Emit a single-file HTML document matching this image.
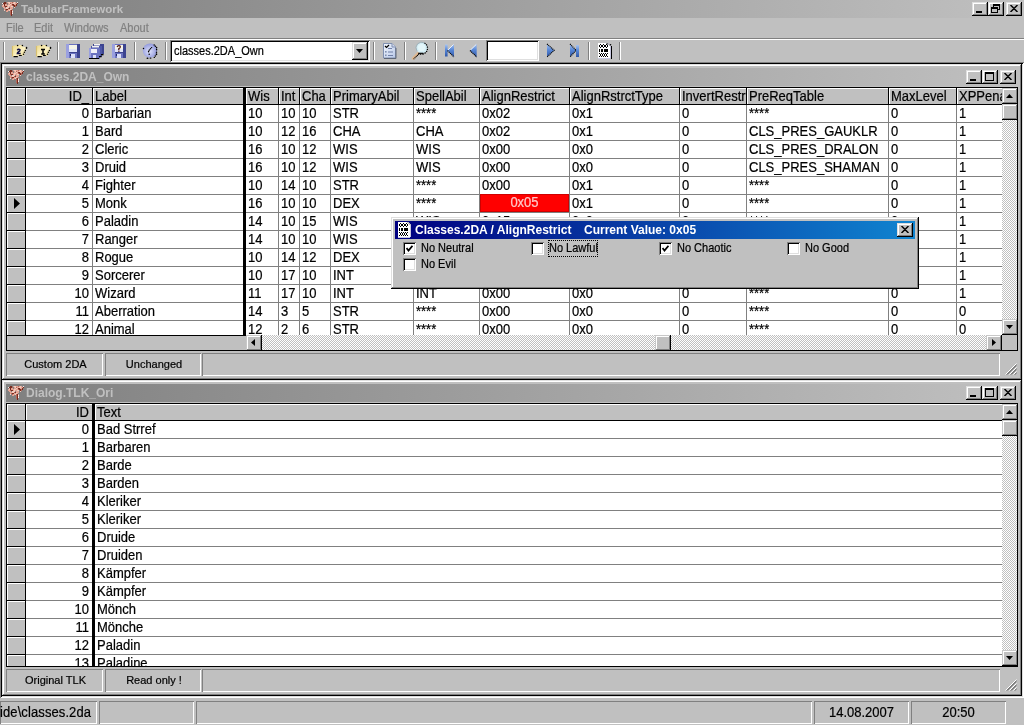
<!DOCTYPE html><html><head><meta charset="utf-8"><style>
*{margin:0;padding:0}
html,body{width:1024px;height:725px;overflow:hidden;background:#c0c0c0;font-family:"Liberation Sans",sans-serif;}
div,svg{position:absolute;box-sizing:border-box}
.t{white-space:pre;will-change:transform;-webkit-text-stroke:0.2px currentColor}
.a{position:absolute}
</style></head><body>
<div style="left:0px;top:0px;width:1024px;height:18px;background:linear-gradient(to right,#808080,#c0c0c0);"></div>
<svg class="a" style="left:0px;top:-1px" width="18" height="17" viewBox="0 0 18 17"><rect x="4" y="3" width="2" height="1" fill="#7a2a1e"/><rect x="7" y="3" width="1" height="1" fill="#e4a494"/><rect x="8" y="3" width="2" height="1" fill="#f4cbbd"/><rect x="10" y="3" width="2" height="1" fill="#e4a494"/><rect x="12" y="3" width="1" height="1" fill="#b4685a"/><rect x="13" y="3" width="1" height="1" fill="#e4a494"/><rect x="14" y="3" width="1" height="1" fill="#f4cbbd"/><rect x="15" y="3" width="1" height="1" fill="#e4a494"/><rect x="17" y="3" width="1" height="1" fill="#f4ecec"/><rect x="2" y="4" width="1" height="1" fill="#f4ecec"/><rect x="3" y="4" width="3" height="1" fill="#7a2a1e"/><rect x="6" y="4" width="1" height="1" fill="#b4685a"/><rect x="8" y="4" width="1" height="1" fill="#e4a494"/><rect x="9" y="4" width="1" height="1" fill="#f4cbbd"/><rect x="10" y="4" width="1" height="1" fill="#b4685a"/><rect x="11" y="4" width="2" height="1" fill="#e4a494"/><rect x="13" y="4" width="2" height="1" fill="#f4cbbd"/><rect x="15" y="4" width="2" height="1" fill="#e4a494"/><rect x="17" y="4" width="1" height="1" fill="#7a2a1e"/><rect x="3" y="5" width="1" height="1" fill="#e4a494"/><rect x="4" y="5" width="1" height="1" fill="#7a2a1e"/><rect x="5" y="5" width="2" height="1" fill="#e4a494"/><rect x="8" y="5" width="2" height="1" fill="#e4a494"/><rect x="10" y="5" width="1" height="1" fill="#f4cbbd"/><rect x="11" y="5" width="1" height="1" fill="#e4a494"/><rect x="12" y="5" width="2" height="1" fill="#7a2a1e"/><rect x="14" y="5" width="2" height="1" fill="#e4a494"/><rect x="16" y="5" width="1" height="1" fill="#7a2a1e"/><rect x="2" y="6" width="1" height="1" fill="#e4a494"/><rect x="3" y="6" width="1" height="1" fill="#f4cbbd"/><rect x="4" y="6" width="1" height="1" fill="#7a2a1e"/><rect x="5" y="6" width="3" height="1" fill="#e4a494"/><rect x="8" y="6" width="2" height="1" fill="#f4cbbd"/><rect x="10" y="6" width="2" height="1" fill="#e4a494"/><rect x="12" y="6" width="1" height="1" fill="#b4685a"/><rect x="13" y="6" width="2" height="1" fill="#7a2a1e"/><rect x="15" y="6" width="1" height="1" fill="#b4685a"/><rect x="16" y="6" width="1" height="1" fill="#7a2a1e"/><rect x="2" y="7" width="2" height="1" fill="#e4a494"/><rect x="4" y="7" width="1" height="1" fill="#b4685a"/><rect x="5" y="7" width="2" height="1" fill="#7a2a1e"/><rect x="7" y="7" width="1" height="1" fill="#e4a494"/><rect x="8" y="7" width="1" height="1" fill="#f4cbbd"/><rect x="9" y="7" width="2" height="1" fill="#e4a494"/><rect x="11" y="7" width="2" height="1" fill="#f4cbbd"/><rect x="14" y="7" width="1" height="1" fill="#7a2a1e"/><rect x="15" y="7" width="1" height="1" fill="#b4685a"/><rect x="3" y="8" width="2" height="1" fill="#e4a494"/><rect x="6" y="8" width="3" height="1" fill="#f4cbbd"/><rect x="10" y="8" width="3" height="1" fill="#e4a494"/><rect x="14" y="8" width="1" height="1" fill="#f4cbbd"/><rect x="4" y="9" width="2" height="1" fill="#e4a494"/><rect x="6" y="9" width="2" height="1" fill="#f4cbbd"/><rect x="8" y="9" width="1" height="1" fill="#b4685a"/><rect x="9" y="9" width="1" height="1" fill="#7a2a1e"/><rect x="10" y="9" width="3" height="1" fill="#e4a494"/><rect x="4" y="10" width="1" height="1" fill="#e4a494"/><rect x="5" y="10" width="1" height="1" fill="#b4685a"/><rect x="6" y="10" width="2" height="1" fill="#7a2a1e"/><rect x="8" y="10" width="2" height="1" fill="#e4a494"/><rect x="10" y="10" width="1" height="1" fill="#f4cbbd"/><rect x="11" y="10" width="1" height="1" fill="#e4a494"/><rect x="4" y="11" width="1" height="1" fill="#f4cbbd"/><rect x="6" y="11" width="1" height="1" fill="#b4685a"/><rect x="7" y="11" width="2" height="1" fill="#e4a494"/><rect x="9" y="11" width="1" height="1" fill="#f4cbbd"/><rect x="10" y="11" width="1" height="1" fill="#b4685a"/><rect x="11" y="11" width="1" height="1" fill="#7a2a1e"/><rect x="12" y="11" width="1" height="1" fill="#e4a494"/><rect x="6" y="12" width="2" height="1" fill="#e4a494"/><rect x="10" y="12" width="1" height="1" fill="#b4685a"/><rect x="11" y="12" width="1" height="1" fill="#7a2a1e"/><rect x="12" y="12" width="1" height="1" fill="#f4ecec"/><rect x="10" y="13" width="1" height="1" fill="#b4685a"/><rect x="11" y="13" width="1" height="1" fill="#7a2a1e"/><rect x="12" y="13" width="1" height="1" fill="#f4cbbd"/><rect x="10" y="14" width="1" height="1" fill="#b4685a"/><rect x="11" y="14" width="1" height="1" fill="#7a2a1e"/><rect x="12" y="14" width="1" height="1" fill="#f4ecec"/><rect x="10" y="15" width="1" height="1" fill="#b4685a"/><rect x="11" y="15" width="1" height="1" fill="#7a2a1e"/><rect x="11" y="16" width="1" height="1" fill="#7a2a1e"/></svg>
<div class="t" style="left:21px;top:3px;font-size:11.5px;line-height:13px;color:#c0c0c0;font-weight:bold;-webkit-text-stroke:0;">TabularFramework</div>
<div style="left:972px;top:2px;width:16px;height:14px;background:#c0c0c0;box-shadow:inset -1px -1px #000,inset 1px 1px #dfdfdf,inset -2px -2px #808080,inset 2px 2px #fff;"></div>
<div style="left:976px;top:11px;width:6px;height:2px;background:#000;"></div>
<div style="left:988px;top:2px;width:16px;height:14px;background:#c0c0c0;box-shadow:inset -1px -1px #000,inset 1px 1px #dfdfdf,inset -2px -2px #808080,inset 2px 2px #fff;"></div>
<div style="left:993px;top:4px;width:7px;height:6px;border:1px solid #000;border-top-width:2px;box-sizing:border-box;"></div>
<div style="left:991px;top:7px;width:7px;height:6px;border:1px solid #000;border-top-width:2px;box-sizing:border-box;background:#c0c0c0;"></div>
<div style="left:1006px;top:2px;width:16px;height:14px;background:#c0c0c0;box-shadow:inset -1px -1px #000,inset 1px 1px #dfdfdf,inset -2px -2px #808080,inset 2px 2px #fff;"></div>
<svg class="a" style="left:1010px;top:5px" width="8" height="7" viewBox="0 0 8 7"><path d="M0.5 0 L4 3.5 L7.5 0 M0.5 7 L4 3.5 L7.5 7" stroke="#000" stroke-width="1.5" fill="none"/></svg>
<div class="t" style="left:6px;top:22px;font-size:11px;line-height:13px;color:#808080;font-weight:normal;transform:scaleY(1.12);transform-origin:0 10px;">File</div>
<div class="t" style="left:34px;top:22px;font-size:11px;line-height:13px;color:#808080;font-weight:normal;transform:scaleY(1.12);transform-origin:0 10px;">Edit</div>
<div class="t" style="left:64px;top:22px;font-size:11px;line-height:13px;color:#808080;font-weight:normal;transform:scaleY(1.12);transform-origin:0 10px;">Windows</div>
<div class="t" style="left:120px;top:22px;font-size:11px;line-height:13px;color:#808080;font-weight:normal;transform:scaleY(1.12);transform-origin:0 10px;">About</div>
<div style="left:0px;top:38px;width:1024px;height:1px;background:#808080;"></div>
<div style="left:0px;top:39px;width:1024px;height:1px;background:#fff;"></div>
<div style="left:3px;top:42px;width:1px;height:18px;background:#808080;"></div>
<div style="left:4px;top:42px;width:1px;height:18px;background:#fff;"></div>
<div style="left:57px;top:42px;width:1px;height:18px;background:#808080;"></div>
<div style="left:58px;top:42px;width:1px;height:18px;background:#fff;"></div>
<div style="left:134px;top:42px;width:1px;height:18px;background:#808080;"></div>
<div style="left:135px;top:42px;width:1px;height:18px;background:#fff;"></div>
<div style="left:165px;top:42px;width:1px;height:18px;background:#808080;"></div>
<div style="left:166px;top:42px;width:1px;height:18px;background:#fff;"></div>
<div style="left:373px;top:42px;width:1px;height:18px;background:#808080;"></div>
<div style="left:374px;top:42px;width:1px;height:18px;background:#fff;"></div>
<div style="left:404px;top:42px;width:1px;height:18px;background:#808080;"></div>
<div style="left:405px;top:42px;width:1px;height:18px;background:#fff;"></div>
<div style="left:435px;top:42px;width:1px;height:18px;background:#808080;"></div>
<div style="left:436px;top:42px;width:1px;height:18px;background:#fff;"></div>
<div style="left:588px;top:42px;width:1px;height:18px;background:#808080;"></div>
<div style="left:589px;top:42px;width:1px;height:18px;background:#fff;"></div>
<div style="left:619px;top:42px;width:1px;height:18px;background:#808080;"></div>
<div style="left:620px;top:42px;width:1px;height:18px;background:#fff;"></div>
<div style="left:0px;top:62px;width:1024px;height:636px;box-shadow:inset 1px 1px #808080,inset -1px -1px #fff,inset 2px 2px #000,inset -2px -2px #dfdfdf;"></div>
<div style="left:0px;top:701px;width:97px;height:23px;box-shadow:inset 1px 1px #808080,inset -1px -1px #fff;"></div>
<div style="left:99px;top:701px;width:95px;height:23px;box-shadow:inset 1px 1px #808080,inset -1px -1px #fff;"></div>
<div style="left:196px;top:701px;width:616px;height:23px;box-shadow:inset 1px 1px #808080,inset -1px -1px #fff;"></div>
<div style="left:814px;top:701px;width:95px;height:23px;box-shadow:inset 1px 1px #808080,inset -1px -1px #fff;"></div>
<div style="left:911px;top:701px;width:95px;height:23px;box-shadow:inset 1px 1px #808080,inset -1px -1px #fff;"></div>
<div class="t" style="left:0px;top:705px;font-size:13px;line-height:15px;color:#000;font-weight:normal;letter-spacing:0.1px;transform:scaleY(1.1);transform-origin:0 12px;">ide\classes.2da</div>
<div class="t" style="left:814px;top:705px;font-size:13px;line-height:15px;color:#000;font-weight:normal;width:95px;text-align:center;transform:scaleY(1.1);transform-origin:0 12px;">14.08.2007</div>
<div class="t" style="left:911px;top:705px;font-size:13px;line-height:15px;color:#000;font-weight:normal;width:95px;text-align:center;transform:scaleY(1.1);transform-origin:0 12px;">20:50</div>
<svg class="a" style="left:9px;top:42px" width="20" height="18" viewBox="0 0 20 18"><defs><linearGradient id="fg" x1="0" y1="0" x2="1" y2="1"><stop offset="0" stop-color="#ecd888"/><stop offset=".55" stop-color="#fcf2c4"/><stop offset="1" stop-color="#e4cc78"/></linearGradient></defs><path d="M3 4 L8.5 3 L13.5 3 L14 4.8 L18 5 L14.8 13.5 L3.5 15 Z" fill="url(#fg)"/><path d="M3.5 4 L3.5 14.5" stroke="#d8c070" stroke-width="1.2"/><circle cx="8.6" cy="3.5" r=".8" fill="#000"/><circle cx="13.4" cy="3.5" r=".8" fill="#000"/><ellipse cx="17.5" cy="5.9" rx=".8" ry="1.1" fill="#000"/><circle cx="16.4" cy="8.4" r=".75" fill="#000"/><circle cx="15.4" cy="10.3" r=".75" fill="#000"/><circle cx="14.5" cy="12.3" r=".75" fill="#000"/><path d="M4.5 14.6 H8.8 M9.9 13.5 H12.8" stroke="#000" stroke-width="1.2"/><path d="M8.3 8.2 Q9.6 6.6 11 7.8 L10.8 8.8 L8.6 10.6 L8.4 11.6 H11.7" stroke="#101048" stroke-width="1.5" fill="none"/></svg>
<svg class="a" style="left:33px;top:42px" width="20" height="18" viewBox="0 0 20 18"><defs><linearGradient id="fg" x1="0" y1="0" x2="1" y2="1"><stop offset="0" stop-color="#ecd888"/><stop offset=".55" stop-color="#fcf2c4"/><stop offset="1" stop-color="#e4cc78"/></linearGradient></defs><path d="M3 4 L8.5 3 L13.5 3 L14 4.8 L18 5 L14.8 13.5 L3.5 15 Z" fill="url(#fg)"/><path d="M3.5 4 L3.5 14.5" stroke="#d8c070" stroke-width="1.2"/><circle cx="8.6" cy="3.5" r=".8" fill="#000"/><circle cx="13.4" cy="3.5" r=".8" fill="#000"/><ellipse cx="17.5" cy="5.9" rx=".8" ry="1.1" fill="#000"/><circle cx="16.4" cy="8.4" r=".75" fill="#000"/><circle cx="15.4" cy="10.3" r=".75" fill="#000"/><circle cx="14.5" cy="12.3" r=".75" fill="#000"/><path d="M4.5 14.6 H8.8 M9.9 13.5 H12.8" stroke="#000" stroke-width="1.2"/><path d="M8 7.5 h4 M10 7.5 v4.5 M8.2 12 h3.6" stroke="#000" stroke-width="1.5" fill="none"/></svg>
<svg class="a" style="left:66px;top:44px" width="14" height="14" viewBox="0 0 14 14"><rect x="0" y="0" width="14" height="14" fill="#6a72c0"/><rect x="0" y="0" width="3" height="14" fill="#9aa0e0"/><rect x="11" y="0" width="3" height="14" fill="#3c4490"/><rect x="3" y="1" width="8" height="7" fill="#f4f4e8"/><rect x="3" y="5" width="8" height="3" fill="#e0e4f8"/><rect x="3" y="8" width="8" height="1" fill="#3c4490"/><rect x="4" y="10" width="2" height="2" fill="#202860"/><rect x="5" y="10" width="4" height="4" fill="#dce0f8"/></svg>
<svg class="a" style="left:112px;top:44px" width="14" height="14" viewBox="0 0 14 14"><rect x="0" y="0" width="14" height="14" fill="#6a72c0"/><rect x="0" y="0" width="3" height="14" fill="#9aa0e0"/><rect x="11" y="0" width="3" height="14" fill="#3c4490"/><rect x="3" y="1" width="8" height="7" fill="#f4f4e8"/><rect x="3" y="5" width="8" height="3" fill="#e0e4f8"/><rect x="3" y="8" width="8" height="1" fill="#3c4490"/><rect x="4" y="10" width="2" height="2" fill="#202860"/><rect x="5" y="10" width="4" height="4" fill="#dce0f8"/><path d="M5.2 3 Q5.5 1.5 7 1.6 Q8.6 1.8 8.2 3.2 Q7.8 4.2 6.8 4.6 V6" stroke="#501810" stroke-width="1.3" fill="none"/><rect x="6.2" y="6.6" width="1.3" height="1.2" fill="#501810"/></svg>
<svg class="a" style="left:88px;top:43px" width="17" height="16" viewBox="0 0 17 16"><rect x="5" y="1" width="11" height="10" fill="#3c4490"/><rect x="6" y="1" width="6" height="1.5" fill="#f4f4f4"/><rect x="3" y="3" width="11" height="11" fill="#4c56a8"/><rect x="4" y="3" width="7" height="1.5" fill="#f4f4f4"/><rect x="1" y="5" width="11" height="11" fill="#6a72c0"/><rect x="1" y="5" width="2" height="11" fill="#9aa0e0"/><rect x="3" y="6" width="6" height="4" fill="#f0f0f8"/><rect x="5" y="12" width="3" height="3" fill="#dce0f8"/><rect x="1" y="15" width="10" height="1.3" fill="#000"/><rect x="11" y="13" width="2.5" height="1.3" fill="#000"/><rect x="13" y="11" width="2.5" height="1.3" fill="#000"/></svg>
<svg class="a" style="left:142px;top:42px" width="16" height="17" viewBox="0 0 16 17"><defs><radialGradient id="gr" cx=".45" cy=".55" r=".6"><stop offset="0" stop-color="#e0e4fc"/><stop offset="1" stop-color="#8890d8"/></radialGradient></defs><circle cx="8" cy="8.6" r="7.2" fill="url(#gr)"/><circle cx="12.2" cy="3" r=".75" fill="#000"/><circle cx="13.4" cy="4.2" r=".75" fill="#000"/><circle cx="14.6" cy="5.5" r=".75" fill="#000"/><ellipse cx="14.6" cy="7.6" rx=".7" ry="1" fill="#000"/><circle cx="14.5" cy="10.3" r=".75" fill="#000"/><ellipse cx="14.5" cy="12.2" rx=".8" ry="1" fill="#000"/><circle cx="13.3" cy="14.1" r=".75" fill="#000"/><circle cx="12.3" cy="15.4" r=".7" fill="#000"/><ellipse cx="8.5" cy="16.1" rx="1" ry=".7" fill="#000"/><ellipse cx="5.5" cy="16.2" rx="1" ry=".7" fill="#000"/><circle cx="1.5" cy="6.5" r=".75" fill="#000"/><circle cx="9.6" cy="5.6" r=".7" fill="#000"/><circle cx="8.5" cy="6.7" r=".7" fill="#000"/><circle cx="7.4" cy="8" r=".7" fill="#000"/><ellipse cx="6.6" cy="9.6" rx=".7" ry="1" fill="#000"/><circle cx="7.2" cy="12.3" r=".75" fill="#000"/></svg>
<div style="left:170px;top:40px;width:200px;height:22px;box-shadow:inset 1px 1px #808080,inset -1px -1px #fff,inset 2px 2px #000,inset -2px -2px #dfdfdf;background:#fff;"></div>
<div style="left:352px;top:42px;width:16px;height:18px;background:#c0c0c0;box-shadow:inset -1px -1px #000,inset 1px 1px #dfdfdf,inset -2px -2px #808080,inset 2px 2px #fff;"></div>
<svg class="a" style="left:356px;top:49px" width="7" height="4" viewBox="0 0 7 4"><path d="M0 0 H7 L3.5 4 Z" fill="#000"/></svg>
<div class="t" style="left:174px;top:45px;font-size:11px;line-height:13px;color:#000;font-weight:normal;transform:scaleY(1.12);transform-origin:0 10px;">classes.2DA_Own</div>
<svg class="a" style="left:383px;top:42px" width="14" height="17" viewBox="0 0 14 17"><defs><linearGradient id="cb" x1="0" y1="0" x2="1" y2="1"><stop offset="0" stop-color="#f4f8ff"/><stop offset="1" stop-color="#b8c8e8"/></linearGradient></defs><path d="M0.5 1.5 H9 L12.5 5 V16 H0.5 Z" fill="url(#cb)" stroke="#8090b0" stroke-width="1"/><path d="M9 1.5 V5 H12.5" fill="#d0d8f0" stroke="#8090b0" stroke-width="1"/><path d="M2 4 L3.5 5.5 L6 3" stroke="#000" stroke-width="1.2" fill="none"/><path d="M5 6.5 H9 M5 10 H10 M5 13.5 H10" stroke="#7080a8" stroke-width="1.2"/><rect x="2" y="9" width="1.6" height="1.6" fill="#8090b0"/><rect x="2" y="12.5" width="1.6" height="1.6" fill="#8090b0"/><path d="M1 16.5 H13 M13 6 V16.5" stroke="#606878" stroke-width="1"/></svg>
<svg class="a" style="left:408px;top:40px" width="24" height="22" viewBox="0 0 24 22"><path d="M10.5 13 L5 18.5" stroke="#e0b890" stroke-width="2.6" stroke-linecap="round"/><path d="M11 13.8 L5.6 19.2" stroke="#000" stroke-width="1.1" stroke-dasharray="1.1 .6"/><circle cx="14" cy="8" r="5.6" fill="#d4eef6"/><circle cx="13.6" cy="7.6" r="3.6" fill="#e4f6fa"/><path d="M9 11 A5.6 5.6 0 0 1 16.5 3" stroke="#a0b4bc" stroke-width="1" fill="none"/><path d="M16.5 3 A5.8 5.8 0 0 1 10.5 13.4" stroke="#000" stroke-width="1.3" fill="none" stroke-dasharray="1.3 .9"/><path d="M10.5 13.3 H15.5" stroke="#000" stroke-width="1.2"/></svg>
<svg class="a" style="left:444px;top:43px" width="12" height="15" viewBox="0 0 12 15"><defs><linearGradient id="nv" x1="0" y1="0" x2="0" y2="1"><stop offset="0" stop-color="#a8c4f0"/><stop offset=".45" stop-color="#5888d8"/><stop offset="1" stop-color="#3058a8"/></linearGradient></defs><rect x="1" y="1.5" width="2.6" height="12" fill="url(#nv)"/><path d="M10 1 V14 L3.5 7.5 Z" fill="url(#nv)"/><path d="M3.8 7.2 L9.5 1.5" stroke="#e8f0ff" stroke-width="1"/><path d="M3.5 7.5 L10 14" stroke="#000" stroke-width="1.1" stroke-dasharray="1.1 .7"/></svg>
<svg class="a" style="left:468px;top:43px" width="10" height="15" viewBox="0 0 10 15"><defs><linearGradient id="nv" x1="0" y1="0" x2="0" y2="1"><stop offset="0" stop-color="#a8c4f0"/><stop offset=".45" stop-color="#5888d8"/><stop offset="1" stop-color="#3058a8"/></linearGradient></defs><path d="M8.7 1 V14 L2 7.5 Z" fill="url(#nv)"/><path d="M2.3 7.2 L8.2 1.5" stroke="#e8f0ff" stroke-width="1"/><path d="M2 7.5 L8.7 14" stroke="#000" stroke-width="1.1" stroke-dasharray="1.1 .7"/></svg>
<div style="left:486px;top:40px;width:53px;height:21px;box-shadow:inset 1px 1px #808080,inset -1px -1px #fff,inset 2px 2px #000,inset -2px -2px #dfdfdf;background:#fff;"></div>
<svg class="a" style="left:546px;top:43px" width="10" height="15" viewBox="0 0 10 15"><defs><linearGradient id="nv" x1="0" y1="0" x2="0" y2="1"><stop offset="0" stop-color="#a8c4f0"/><stop offset=".45" stop-color="#5888d8"/><stop offset="1" stop-color="#3058a8"/></linearGradient></defs><path d="M1 1 V14 L8.2 7.3 Z" fill="url(#nv)"/><path d="M1 1 L8.2 7.3 L1 14" stroke="#000" stroke-width="1.1" fill="none" stroke-dasharray="1.1 .7"/></svg>
<svg class="a" style="left:569px;top:43px" width="12" height="15" viewBox="0 0 12 15"><defs><linearGradient id="nv" x1="0" y1="0" x2="0" y2="1"><stop offset="0" stop-color="#a8c4f0"/><stop offset=".45" stop-color="#5888d8"/><stop offset="1" stop-color="#3058a8"/></linearGradient></defs><rect x="7" y="2" width="3" height="12" fill="url(#nv)"/><path d="M1 1 V14 L7 7.3 Z" fill="url(#nv)"/><path d="M1 1 L7 7.3 L1 14" stroke="#000" stroke-width="1.1" fill="none" stroke-dasharray="1.1 .7"/></svg>
<svg class="a" style="left:598px;top:43px" width="13" height="16" viewBox="0 0 13 16"><rect x="0" y="0" width="9" height="1" fill="#ffffff"/><rect x="9" y="0" width="2" height="1" fill="#b8b8c0"/><rect x="0" y="1" width="2" height="1" fill="#ffffff"/><rect x="2" y="1" width="1" height="1" fill="#000000"/><rect x="3" y="1" width="2" height="1" fill="#ffffff"/><rect x="5" y="1" width="1" height="1" fill="#000000"/><rect x="6" y="1" width="2" height="1" fill="#ffffff"/><rect x="8" y="1" width="1" height="1" fill="#000000"/><rect x="9" y="1" width="1" height="1" fill="#ffffff"/><rect x="10" y="1" width="2" height="1" fill="#b8b8c0"/><rect x="0" y="2" width="1" height="1" fill="#ffffff"/><rect x="1" y="2" width="1" height="1" fill="#000000"/><rect x="2" y="2" width="1" height="1" fill="#ffffff"/><rect x="3" y="2" width="2" height="1" fill="#000000"/><rect x="5" y="2" width="1" height="1" fill="#ffffff"/><rect x="6" y="2" width="2" height="1" fill="#000000"/><rect x="8" y="2" width="1" height="1" fill="#ffffff"/><rect x="9" y="2" width="1" height="1" fill="#000000"/><rect x="10" y="2" width="1" height="1" fill="#ffffff"/><rect x="11" y="2" width="2" height="1" fill="#b8b8c0"/><rect x="0" y="3" width="1" height="1" fill="#ffffff"/><rect x="1" y="3" width="1" height="1" fill="#000000"/><rect x="2" y="3" width="1" height="1" fill="#ffffff"/><rect x="3" y="3" width="2" height="1" fill="#000000"/><rect x="5" y="3" width="1" height="1" fill="#ffffff"/><rect x="6" y="3" width="2" height="1" fill="#000000"/><rect x="8" y="3" width="1" height="1" fill="#ffffff"/><rect x="9" y="3" width="1" height="1" fill="#000000"/><rect x="10" y="3" width="2" height="1" fill="#ffffff"/><rect x="12" y="3" width="1" height="1" fill="#c8c8e0"/><rect x="0" y="4" width="2" height="1" fill="#ffffff"/><rect x="2" y="4" width="1" height="1" fill="#000000"/><rect x="3" y="4" width="2" height="1" fill="#ffffff"/><rect x="5" y="4" width="1" height="1" fill="#000000"/><rect x="6" y="4" width="2" height="1" fill="#ffffff"/><rect x="8" y="4" width="1" height="1" fill="#000000"/><rect x="9" y="4" width="3" height="1" fill="#ffffff"/><rect x="12" y="4" width="1" height="1" fill="#c8c8e0"/><rect x="0" y="5" width="12" height="1" fill="#ffffff"/><rect x="12" y="5" width="1" height="1" fill="#c8c8e0"/><rect x="0" y="6" width="1" height="1" fill="#ffffff"/><rect x="1" y="6" width="1" height="1" fill="#000000"/><rect x="2" y="6" width="1" height="1" fill="#ffffff"/><rect x="3" y="6" width="2" height="1" fill="#000000"/><rect x="5" y="6" width="1" height="1" fill="#ffffff"/><rect x="6" y="6" width="4" height="1" fill="#000000"/><rect x="10" y="6" width="2" height="1" fill="#ffffff"/><rect x="12" y="6" width="1" height="1" fill="#c8c8e0"/><rect x="0" y="7" width="1" height="1" fill="#ffffff"/><rect x="1" y="7" width="1" height="1" fill="#000000"/><rect x="2" y="7" width="1" height="1" fill="#ffffff"/><rect x="3" y="7" width="2" height="1" fill="#000000"/><rect x="5" y="7" width="1" height="1" fill="#ffffff"/><rect x="6" y="7" width="4" height="1" fill="#000000"/><rect x="10" y="7" width="2" height="1" fill="#ffffff"/><rect x="12" y="7" width="1" height="1" fill="#c8c8e0"/><rect x="0" y="8" width="1" height="1" fill="#ffffff"/><rect x="1" y="8" width="1" height="1" fill="#000000"/><rect x="2" y="8" width="1" height="1" fill="#ffffff"/><rect x="3" y="8" width="2" height="1" fill="#000000"/><rect x="5" y="8" width="1" height="1" fill="#ffffff"/><rect x="6" y="8" width="4" height="1" fill="#000000"/><rect x="10" y="8" width="2" height="1" fill="#ffffff"/><rect x="12" y="8" width="1" height="1" fill="#c8c8e0"/><rect x="0" y="9" width="12" height="1" fill="#ffffff"/><rect x="12" y="9" width="1" height="1" fill="#c8c8e0"/><rect x="0" y="10" width="1" height="1" fill="#ffffff"/><rect x="1" y="10" width="1" height="1" fill="#000000"/><rect x="2" y="10" width="1" height="1" fill="#ffffff"/><rect x="3" y="10" width="1" height="1" fill="#000000"/><rect x="4" y="10" width="1" height="1" fill="#ffffff"/><rect x="5" y="10" width="1" height="1" fill="#000000"/><rect x="6" y="10" width="1" height="1" fill="#ffffff"/><rect x="7" y="10" width="1" height="1" fill="#000000"/><rect x="8" y="10" width="1" height="1" fill="#ffffff"/><rect x="9" y="10" width="1" height="1" fill="#000000"/><rect x="10" y="10" width="2" height="1" fill="#ffffff"/><rect x="12" y="10" width="1" height="1" fill="#c8c8e0"/><rect x="0" y="11" width="2" height="1" fill="#ffffff"/><rect x="2" y="11" width="1" height="1" fill="#000000"/><rect x="3" y="11" width="1" height="1" fill="#ffffff"/><rect x="4" y="11" width="1" height="1" fill="#000000"/><rect x="5" y="11" width="1" height="1" fill="#ffffff"/><rect x="6" y="11" width="1" height="1" fill="#000000"/><rect x="7" y="11" width="1" height="1" fill="#ffffff"/><rect x="8" y="11" width="1" height="1" fill="#000000"/><rect x="9" y="11" width="3" height="1" fill="#ffffff"/><rect x="12" y="11" width="1" height="1" fill="#c8c8e0"/><rect x="0" y="12" width="2" height="1" fill="#ffffff"/><rect x="2" y="12" width="1" height="1" fill="#000000"/><rect x="3" y="12" width="1" height="1" fill="#ffffff"/><rect x="4" y="12" width="1" height="1" fill="#000000"/><rect x="5" y="12" width="1" height="1" fill="#ffffff"/><rect x="6" y="12" width="1" height="1" fill="#000000"/><rect x="7" y="12" width="1" height="1" fill="#ffffff"/><rect x="8" y="12" width="1" height="1" fill="#000000"/><rect x="9" y="12" width="3" height="1" fill="#ffffff"/><rect x="12" y="12" width="1" height="1" fill="#c8c8e0"/><rect x="0" y="13" width="1" height="1" fill="#ffffff"/><rect x="1" y="13" width="1" height="1" fill="#000000"/><rect x="2" y="13" width="1" height="1" fill="#ffffff"/><rect x="3" y="13" width="1" height="1" fill="#000000"/><rect x="4" y="13" width="1" height="1" fill="#ffffff"/><rect x="5" y="13" width="1" height="1" fill="#000000"/><rect x="6" y="13" width="1" height="1" fill="#ffffff"/><rect x="7" y="13" width="1" height="1" fill="#000000"/><rect x="8" y="13" width="1" height="1" fill="#ffffff"/><rect x="9" y="13" width="1" height="1" fill="#000000"/><rect x="10" y="13" width="2" height="1" fill="#ffffff"/><rect x="12" y="13" width="1" height="1" fill="#c8c8e0"/><rect x="0" y="14" width="12" height="1" fill="#ffffff"/><rect x="12" y="14" width="1" height="1" fill="#c8c8e0"/><rect x="0" y="15" width="12" height="1" fill="#c8c8e0"/></svg>
<div style="left:611px;top:46px;width:1px;height:13px;background:#000;"></div>
<svg class="a" style="left:606px;top:43px" width="6" height="3" viewBox="0 0 6 3"><circle cx="1" cy="1" r=".8" fill="#000"/><circle cx="4.5" cy="1.8" r=".8" fill="#000"/></svg>
<div style="left:2px;top:64px;width:1020px;height:316px;background:#c0c0c0;box-shadow:inset -1px -1px #000,inset 1px 1px #dfdfdf,inset -2px -2px #808080,inset 2px 2px #fff;"></div>
<div style="left:6px;top:68px;width:1012px;height:18px;background:linear-gradient(to right,#808080,#c0c0c0);"></div>
<svg class="a" style="left:6px;top:67px" width="18" height="17" viewBox="0 0 18 17"><rect x="4" y="3" width="2" height="1" fill="#7a2a1e"/><rect x="7" y="3" width="1" height="1" fill="#e4a494"/><rect x="8" y="3" width="2" height="1" fill="#f4cbbd"/><rect x="10" y="3" width="2" height="1" fill="#e4a494"/><rect x="12" y="3" width="1" height="1" fill="#b4685a"/><rect x="13" y="3" width="1" height="1" fill="#e4a494"/><rect x="14" y="3" width="1" height="1" fill="#f4cbbd"/><rect x="15" y="3" width="1" height="1" fill="#e4a494"/><rect x="17" y="3" width="1" height="1" fill="#f4ecec"/><rect x="2" y="4" width="1" height="1" fill="#f4ecec"/><rect x="3" y="4" width="3" height="1" fill="#7a2a1e"/><rect x="6" y="4" width="1" height="1" fill="#b4685a"/><rect x="8" y="4" width="1" height="1" fill="#e4a494"/><rect x="9" y="4" width="1" height="1" fill="#f4cbbd"/><rect x="10" y="4" width="1" height="1" fill="#b4685a"/><rect x="11" y="4" width="2" height="1" fill="#e4a494"/><rect x="13" y="4" width="2" height="1" fill="#f4cbbd"/><rect x="15" y="4" width="2" height="1" fill="#e4a494"/><rect x="17" y="4" width="1" height="1" fill="#7a2a1e"/><rect x="3" y="5" width="1" height="1" fill="#e4a494"/><rect x="4" y="5" width="1" height="1" fill="#7a2a1e"/><rect x="5" y="5" width="2" height="1" fill="#e4a494"/><rect x="8" y="5" width="2" height="1" fill="#e4a494"/><rect x="10" y="5" width="1" height="1" fill="#f4cbbd"/><rect x="11" y="5" width="1" height="1" fill="#e4a494"/><rect x="12" y="5" width="2" height="1" fill="#7a2a1e"/><rect x="14" y="5" width="2" height="1" fill="#e4a494"/><rect x="16" y="5" width="1" height="1" fill="#7a2a1e"/><rect x="2" y="6" width="1" height="1" fill="#e4a494"/><rect x="3" y="6" width="1" height="1" fill="#f4cbbd"/><rect x="4" y="6" width="1" height="1" fill="#7a2a1e"/><rect x="5" y="6" width="3" height="1" fill="#e4a494"/><rect x="8" y="6" width="2" height="1" fill="#f4cbbd"/><rect x="10" y="6" width="2" height="1" fill="#e4a494"/><rect x="12" y="6" width="1" height="1" fill="#b4685a"/><rect x="13" y="6" width="2" height="1" fill="#7a2a1e"/><rect x="15" y="6" width="1" height="1" fill="#b4685a"/><rect x="16" y="6" width="1" height="1" fill="#7a2a1e"/><rect x="2" y="7" width="2" height="1" fill="#e4a494"/><rect x="4" y="7" width="1" height="1" fill="#b4685a"/><rect x="5" y="7" width="2" height="1" fill="#7a2a1e"/><rect x="7" y="7" width="1" height="1" fill="#e4a494"/><rect x="8" y="7" width="1" height="1" fill="#f4cbbd"/><rect x="9" y="7" width="2" height="1" fill="#e4a494"/><rect x="11" y="7" width="2" height="1" fill="#f4cbbd"/><rect x="14" y="7" width="1" height="1" fill="#7a2a1e"/><rect x="15" y="7" width="1" height="1" fill="#b4685a"/><rect x="3" y="8" width="2" height="1" fill="#e4a494"/><rect x="6" y="8" width="3" height="1" fill="#f4cbbd"/><rect x="10" y="8" width="3" height="1" fill="#e4a494"/><rect x="14" y="8" width="1" height="1" fill="#f4cbbd"/><rect x="4" y="9" width="2" height="1" fill="#e4a494"/><rect x="6" y="9" width="2" height="1" fill="#f4cbbd"/><rect x="8" y="9" width="1" height="1" fill="#b4685a"/><rect x="9" y="9" width="1" height="1" fill="#7a2a1e"/><rect x="10" y="9" width="3" height="1" fill="#e4a494"/><rect x="4" y="10" width="1" height="1" fill="#e4a494"/><rect x="5" y="10" width="1" height="1" fill="#b4685a"/><rect x="6" y="10" width="2" height="1" fill="#7a2a1e"/><rect x="8" y="10" width="2" height="1" fill="#e4a494"/><rect x="10" y="10" width="1" height="1" fill="#f4cbbd"/><rect x="11" y="10" width="1" height="1" fill="#e4a494"/><rect x="4" y="11" width="1" height="1" fill="#f4cbbd"/><rect x="6" y="11" width="1" height="1" fill="#b4685a"/><rect x="7" y="11" width="2" height="1" fill="#e4a494"/><rect x="9" y="11" width="1" height="1" fill="#f4cbbd"/><rect x="10" y="11" width="1" height="1" fill="#b4685a"/><rect x="11" y="11" width="1" height="1" fill="#7a2a1e"/><rect x="12" y="11" width="1" height="1" fill="#e4a494"/><rect x="6" y="12" width="2" height="1" fill="#e4a494"/><rect x="10" y="12" width="1" height="1" fill="#b4685a"/><rect x="11" y="12" width="1" height="1" fill="#7a2a1e"/><rect x="12" y="12" width="1" height="1" fill="#f4ecec"/><rect x="10" y="13" width="1" height="1" fill="#b4685a"/><rect x="11" y="13" width="1" height="1" fill="#7a2a1e"/><rect x="12" y="13" width="1" height="1" fill="#f4cbbd"/><rect x="10" y="14" width="1" height="1" fill="#b4685a"/><rect x="11" y="14" width="1" height="1" fill="#7a2a1e"/><rect x="12" y="14" width="1" height="1" fill="#f4ecec"/><rect x="10" y="15" width="1" height="1" fill="#b4685a"/><rect x="11" y="15" width="1" height="1" fill="#7a2a1e"/><rect x="11" y="16" width="1" height="1" fill="#7a2a1e"/></svg>
<div class="t" style="left:26px;top:70px;font-size:12px;line-height:14px;color:#c0c0c0;font-weight:bold;-webkit-text-stroke:0;">classes.2DA_Own</div>
<div style="left:966px;top:70px;width:16px;height:14px;background:#c0c0c0;box-shadow:inset -1px -1px #000,inset 1px 1px #dfdfdf,inset -2px -2px #808080,inset 2px 2px #fff;"></div>
<div style="left:970px;top:79px;width:6px;height:2px;background:#000;"></div>
<div style="left:982px;top:70px;width:16px;height:14px;background:#c0c0c0;box-shadow:inset -1px -1px #000,inset 1px 1px #dfdfdf,inset -2px -2px #808080,inset 2px 2px #fff;"></div>
<div style="left:985px;top:72px;width:9px;height:9px;border:1px solid #000;border-top-width:2px;box-sizing:border-box;"></div>
<div style="left:1000px;top:70px;width:16px;height:14px;background:#c0c0c0;box-shadow:inset -1px -1px #000,inset 1px 1px #dfdfdf,inset -2px -2px #808080,inset 2px 2px #fff;"></div>
<svg class="a" style="left:1004px;top:73px" width="8" height="7" viewBox="0 0 8 7"><path d="M0.5 0 L4 3.5 L7.5 0 M0.5 7 L4 3.5 L7.5 7" stroke="#000" stroke-width="1.5" fill="none"/></svg>
<div style="left:6px;top:87px;width:1012px;height:264px;background:#fff;border:1px solid #000;"></div>
<div style="left:7px;top:88px;width:995px;height:247px;overflow:hidden">
<div style="left:0px;top:0px;width:18px;height:16px;background:#c0c0c0;box-shadow:inset 1px 1px #fff;"></div>
<div style="left:19px;top:0px;width:66px;height:16px;background:#c0c0c0;box-shadow:inset 1px 1px #fff;"></div>
<div style="left:86px;top:0px;width:150px;height:16px;background:#c0c0c0;box-shadow:inset 1px 1px #fff;"></div>
<div style="left:239px;top:0px;width:32px;height:16px;background:#c0c0c0;box-shadow:inset 1px 1px #fff;"></div>
<div style="left:272px;top:0px;width:20px;height:16px;background:#c0c0c0;box-shadow:inset 1px 1px #fff;"></div>
<div style="left:293px;top:0px;width:30px;height:16px;background:#c0c0c0;box-shadow:inset 1px 1px #fff;"></div>
<div style="left:324px;top:0px;width:82px;height:16px;background:#c0c0c0;box-shadow:inset 1px 1px #fff;"></div>
<div style="left:407px;top:0px;width:65px;height:16px;background:#c0c0c0;box-shadow:inset 1px 1px #fff;"></div>
<div style="left:473px;top:0px;width:89px;height:16px;background:#c0c0c0;box-shadow:inset 1px 1px #fff;"></div>
<div style="left:563px;top:0px;width:109px;height:16px;background:#c0c0c0;box-shadow:inset 1px 1px #fff;"></div>
<div style="left:673px;top:0px;width:66px;height:16px;background:#c0c0c0;box-shadow:inset 1px 1px #fff;"></div>
<div style="left:740px;top:0px;width:141px;height:16px;background:#c0c0c0;box-shadow:inset 1px 1px #fff;"></div>
<div style="left:882px;top:0px;width:67px;height:16px;background:#c0c0c0;box-shadow:inset 1px 1px #fff;"></div>
<div style="left:950px;top:0px;width:83px;height:16px;background:#c0c0c0;box-shadow:inset 1px 1px #fff;"></div>
<div style="left:0px;top:16px;width:1200px;height:1px;background:#000;"></div>
<div style="left:0px;top:17px;width:18px;height:17px;background:#c0c0c0;box-shadow:inset 1px 1px #fff;"></div>
<div style="left:0px;top:34px;width:18px;height:1px;background:#000;"></div>
<div style="left:19px;top:34px;width:1200px;height:1px;background:#808080;"></div>
<div style="left:0px;top:35px;width:18px;height:17px;background:#c0c0c0;box-shadow:inset 1px 1px #fff;"></div>
<div style="left:0px;top:52px;width:18px;height:1px;background:#000;"></div>
<div style="left:19px;top:52px;width:1200px;height:1px;background:#808080;"></div>
<div style="left:0px;top:53px;width:18px;height:17px;background:#c0c0c0;box-shadow:inset 1px 1px #fff;"></div>
<div style="left:0px;top:70px;width:18px;height:1px;background:#000;"></div>
<div style="left:19px;top:70px;width:1200px;height:1px;background:#808080;"></div>
<div style="left:0px;top:71px;width:18px;height:17px;background:#c0c0c0;box-shadow:inset 1px 1px #fff;"></div>
<div style="left:0px;top:88px;width:18px;height:1px;background:#000;"></div>
<div style="left:19px;top:88px;width:1200px;height:1px;background:#808080;"></div>
<div style="left:0px;top:89px;width:18px;height:17px;background:#c0c0c0;box-shadow:inset 1px 1px #fff;"></div>
<div style="left:0px;top:106px;width:18px;height:1px;background:#000;"></div>
<div style="left:19px;top:106px;width:1200px;height:1px;background:#808080;"></div>
<div style="left:0px;top:107px;width:18px;height:17px;background:#c0c0c0;box-shadow:inset 1px 1px #fff;"></div>
<div style="left:0px;top:124px;width:18px;height:1px;background:#000;"></div>
<div style="left:19px;top:124px;width:1200px;height:1px;background:#808080;"></div>
<div style="left:0px;top:125px;width:18px;height:17px;background:#c0c0c0;box-shadow:inset 1px 1px #fff;"></div>
<div style="left:0px;top:142px;width:18px;height:1px;background:#000;"></div>
<div style="left:19px;top:142px;width:1200px;height:1px;background:#808080;"></div>
<div style="left:0px;top:143px;width:18px;height:17px;background:#c0c0c0;box-shadow:inset 1px 1px #fff;"></div>
<div style="left:0px;top:160px;width:18px;height:1px;background:#000;"></div>
<div style="left:19px;top:160px;width:1200px;height:1px;background:#808080;"></div>
<div style="left:0px;top:161px;width:18px;height:17px;background:#c0c0c0;box-shadow:inset 1px 1px #fff;"></div>
<div style="left:0px;top:178px;width:18px;height:1px;background:#000;"></div>
<div style="left:19px;top:178px;width:1200px;height:1px;background:#808080;"></div>
<div style="left:0px;top:179px;width:18px;height:17px;background:#c0c0c0;box-shadow:inset 1px 1px #fff;"></div>
<div style="left:0px;top:196px;width:18px;height:1px;background:#000;"></div>
<div style="left:19px;top:196px;width:1200px;height:1px;background:#808080;"></div>
<div style="left:0px;top:197px;width:18px;height:17px;background:#c0c0c0;box-shadow:inset 1px 1px #fff;"></div>
<div style="left:0px;top:214px;width:18px;height:1px;background:#000;"></div>
<div style="left:19px;top:214px;width:1200px;height:1px;background:#808080;"></div>
<div style="left:0px;top:215px;width:18px;height:17px;background:#c0c0c0;box-shadow:inset 1px 1px #fff;"></div>
<div style="left:0px;top:232px;width:18px;height:1px;background:#000;"></div>
<div style="left:19px;top:232px;width:1200px;height:1px;background:#808080;"></div>
<div style="left:0px;top:233px;width:18px;height:17px;background:#c0c0c0;box-shadow:inset 1px 1px #fff;"></div>
<div style="left:0px;top:250px;width:18px;height:1px;background:#000;"></div>
<div style="left:19px;top:250px;width:1200px;height:1px;background:#808080;"></div>
<div style="left:18px;top:0px;width:1px;height:600px;background:#000;"></div>
<div style="left:85px;top:0px;width:1px;height:17px;background:#000;"></div>
<div style="left:85px;top:17px;width:1px;height:600px;background:#808080;"></div>
<div style="left:236px;top:0px;width:3px;height:600px;background:#000;"></div>
<div style="left:271px;top:0px;width:1px;height:17px;background:#000;"></div>
<div style="left:271px;top:17px;width:1px;height:600px;background:#808080;"></div>
<div style="left:292px;top:0px;width:1px;height:17px;background:#000;"></div>
<div style="left:292px;top:17px;width:1px;height:600px;background:#808080;"></div>
<div style="left:323px;top:0px;width:1px;height:17px;background:#000;"></div>
<div style="left:323px;top:17px;width:1px;height:600px;background:#808080;"></div>
<div style="left:406px;top:0px;width:1px;height:17px;background:#000;"></div>
<div style="left:406px;top:17px;width:1px;height:600px;background:#808080;"></div>
<div style="left:472px;top:0px;width:1px;height:17px;background:#000;"></div>
<div style="left:472px;top:17px;width:1px;height:600px;background:#808080;"></div>
<div style="left:562px;top:0px;width:1px;height:17px;background:#000;"></div>
<div style="left:562px;top:17px;width:1px;height:600px;background:#808080;"></div>
<div style="left:672px;top:0px;width:1px;height:17px;background:#000;"></div>
<div style="left:672px;top:17px;width:1px;height:600px;background:#808080;"></div>
<div style="left:739px;top:0px;width:1px;height:17px;background:#000;"></div>
<div style="left:739px;top:17px;width:1px;height:600px;background:#808080;"></div>
<div style="left:881px;top:0px;width:1px;height:17px;background:#000;"></div>
<div style="left:881px;top:17px;width:1px;height:600px;background:#808080;"></div>
<div style="left:949px;top:0px;width:1px;height:17px;background:#000;"></div>
<div style="left:949px;top:17px;width:1px;height:600px;background:#808080;"></div>
<div style="left:1033px;top:0px;width:1px;height:17px;background:#000;"></div>
<div style="left:1033px;top:17px;width:1px;height:600px;background:#808080;"></div>
<div class="t" style="left:19px;top:1px;font-size:13px;line-height:15px;color:#000;font-weight:normal;width:63px;text-align:right;transform:scaleY(1.1);transform-origin:0 12px;">ID_</div>
<div class="t" style="left:88px;top:1px;font-size:13px;line-height:15px;color:#000;font-weight:normal;width:148px;text-align:left;transform:scaleY(1.1);transform-origin:0 12px;overflow:hidden;">Label</div>
<div class="t" style="left:241px;top:1px;font-size:13px;line-height:15px;color:#000;font-weight:normal;width:30px;text-align:left;transform:scaleY(1.1);transform-origin:0 12px;overflow:hidden;">Wis</div>
<div class="t" style="left:274px;top:1px;font-size:13px;line-height:15px;color:#000;font-weight:normal;width:18px;text-align:left;transform:scaleY(1.1);transform-origin:0 12px;overflow:hidden;">Int</div>
<div class="t" style="left:295px;top:1px;font-size:13px;line-height:15px;color:#000;font-weight:normal;width:28px;text-align:left;transform:scaleY(1.1);transform-origin:0 12px;overflow:hidden;">Cha</div>
<div class="t" style="left:326px;top:1px;font-size:13px;line-height:15px;color:#000;font-weight:normal;width:80px;text-align:left;transform:scaleY(1.1);transform-origin:0 12px;overflow:hidden;">PrimaryAbil</div>
<div class="t" style="left:409px;top:1px;font-size:13px;line-height:15px;color:#000;font-weight:normal;width:63px;text-align:left;transform:scaleY(1.1);transform-origin:0 12px;overflow:hidden;">SpellAbil</div>
<div class="t" style="left:475px;top:1px;font-size:13px;line-height:15px;color:#000;font-weight:normal;width:87px;text-align:left;transform:scaleY(1.1);transform-origin:0 12px;overflow:hidden;">AlignRestrict</div>
<div class="t" style="left:565px;top:1px;font-size:13px;line-height:15px;color:#000;font-weight:normal;width:107px;text-align:left;transform:scaleY(1.1);transform-origin:0 12px;overflow:hidden;">AlignRstrctType</div>
<div class="t" style="left:675px;top:1px;font-size:13px;line-height:15px;color:#000;font-weight:normal;width:64px;text-align:left;transform:scaleY(1.1);transform-origin:0 12px;overflow:hidden;">InvertRestr</div>
<div class="t" style="left:742px;top:1px;font-size:13px;line-height:15px;color:#000;font-weight:normal;width:139px;text-align:left;transform:scaleY(1.1);transform-origin:0 12px;overflow:hidden;">PreReqTable</div>
<div class="t" style="left:884px;top:1px;font-size:13px;line-height:15px;color:#000;font-weight:normal;width:65px;text-align:left;transform:scaleY(1.1);transform-origin:0 12px;overflow:hidden;">MaxLevel</div>
<div class="t" style="left:952px;top:1px;font-size:13px;line-height:15px;color:#000;font-weight:normal;width:81px;text-align:left;transform:scaleY(1.1);transform-origin:0 12px;overflow:hidden;">XPPenalty</div>
<div class="t" style="left:19px;top:18px;font-size:13px;line-height:15px;color:#000;font-weight:normal;width:63px;text-align:right;transform:scaleY(1.1);transform-origin:0 12px;">0</div>
<div class="t" style="left:88px;top:18px;font-size:13px;line-height:15px;color:#000;font-weight:normal;width:148px;text-align:left;transform:scaleY(1.1);transform-origin:0 12px;overflow:hidden;">Barbarian</div>
<div class="t" style="left:241px;top:18px;font-size:13px;line-height:15px;color:#000;font-weight:normal;width:30px;text-align:left;transform:scaleY(1.1);transform-origin:0 12px;overflow:hidden;">10</div>
<div class="t" style="left:274px;top:18px;font-size:13px;line-height:15px;color:#000;font-weight:normal;width:18px;text-align:left;transform:scaleY(1.1);transform-origin:0 12px;overflow:hidden;">10</div>
<div class="t" style="left:295px;top:18px;font-size:13px;line-height:15px;color:#000;font-weight:normal;width:28px;text-align:left;transform:scaleY(1.1);transform-origin:0 12px;overflow:hidden;">10</div>
<div class="t" style="left:326px;top:18px;font-size:13px;line-height:15px;color:#000;font-weight:normal;width:80px;text-align:left;transform:scaleY(1.1);transform-origin:0 12px;overflow:hidden;">STR</div>
<div class="t" style="left:409px;top:18px;font-size:13px;line-height:15px;color:#000;font-weight:normal;width:63px;text-align:left;transform:scaleY(1.1);transform-origin:0 12px;overflow:hidden;">****</div>
<div class="t" style="left:475px;top:18px;font-size:13px;line-height:15px;color:#000;font-weight:normal;width:87px;text-align:left;transform:scaleY(1.1);transform-origin:0 12px;overflow:hidden;">0x02</div>
<div class="t" style="left:565px;top:18px;font-size:13px;line-height:15px;color:#000;font-weight:normal;width:107px;text-align:left;transform:scaleY(1.1);transform-origin:0 12px;overflow:hidden;">0x1</div>
<div class="t" style="left:675px;top:18px;font-size:13px;line-height:15px;color:#000;font-weight:normal;width:64px;text-align:left;transform:scaleY(1.1);transform-origin:0 12px;overflow:hidden;">0</div>
<div class="t" style="left:742px;top:18px;font-size:13px;line-height:15px;color:#000;font-weight:normal;width:139px;text-align:left;transform:scaleY(1.1);transform-origin:0 12px;overflow:hidden;">****</div>
<div class="t" style="left:884px;top:18px;font-size:13px;line-height:15px;color:#000;font-weight:normal;width:65px;text-align:left;transform:scaleY(1.1);transform-origin:0 12px;overflow:hidden;">0</div>
<div class="t" style="left:952px;top:18px;font-size:13px;line-height:15px;color:#000;font-weight:normal;width:81px;text-align:left;transform:scaleY(1.1);transform-origin:0 12px;overflow:hidden;">1</div>
<div class="t" style="left:19px;top:36px;font-size:13px;line-height:15px;color:#000;font-weight:normal;width:63px;text-align:right;transform:scaleY(1.1);transform-origin:0 12px;">1</div>
<div class="t" style="left:88px;top:36px;font-size:13px;line-height:15px;color:#000;font-weight:normal;width:148px;text-align:left;transform:scaleY(1.1);transform-origin:0 12px;overflow:hidden;">Bard</div>
<div class="t" style="left:241px;top:36px;font-size:13px;line-height:15px;color:#000;font-weight:normal;width:30px;text-align:left;transform:scaleY(1.1);transform-origin:0 12px;overflow:hidden;">10</div>
<div class="t" style="left:274px;top:36px;font-size:13px;line-height:15px;color:#000;font-weight:normal;width:18px;text-align:left;transform:scaleY(1.1);transform-origin:0 12px;overflow:hidden;">12</div>
<div class="t" style="left:295px;top:36px;font-size:13px;line-height:15px;color:#000;font-weight:normal;width:28px;text-align:left;transform:scaleY(1.1);transform-origin:0 12px;overflow:hidden;">16</div>
<div class="t" style="left:326px;top:36px;font-size:13px;line-height:15px;color:#000;font-weight:normal;width:80px;text-align:left;transform:scaleY(1.1);transform-origin:0 12px;overflow:hidden;">CHA</div>
<div class="t" style="left:409px;top:36px;font-size:13px;line-height:15px;color:#000;font-weight:normal;width:63px;text-align:left;transform:scaleY(1.1);transform-origin:0 12px;overflow:hidden;">CHA</div>
<div class="t" style="left:475px;top:36px;font-size:13px;line-height:15px;color:#000;font-weight:normal;width:87px;text-align:left;transform:scaleY(1.1);transform-origin:0 12px;overflow:hidden;">0x02</div>
<div class="t" style="left:565px;top:36px;font-size:13px;line-height:15px;color:#000;font-weight:normal;width:107px;text-align:left;transform:scaleY(1.1);transform-origin:0 12px;overflow:hidden;">0x1</div>
<div class="t" style="left:675px;top:36px;font-size:13px;line-height:15px;color:#000;font-weight:normal;width:64px;text-align:left;transform:scaleY(1.1);transform-origin:0 12px;overflow:hidden;">0</div>
<div class="t" style="left:742px;top:36px;font-size:13px;line-height:15px;color:#000;font-weight:normal;width:139px;text-align:left;transform:scaleY(1.1);transform-origin:0 12px;overflow:hidden;">CLS_PRES_GAUKLR</div>
<div class="t" style="left:884px;top:36px;font-size:13px;line-height:15px;color:#000;font-weight:normal;width:65px;text-align:left;transform:scaleY(1.1);transform-origin:0 12px;overflow:hidden;">0</div>
<div class="t" style="left:952px;top:36px;font-size:13px;line-height:15px;color:#000;font-weight:normal;width:81px;text-align:left;transform:scaleY(1.1);transform-origin:0 12px;overflow:hidden;">1</div>
<div class="t" style="left:19px;top:54px;font-size:13px;line-height:15px;color:#000;font-weight:normal;width:63px;text-align:right;transform:scaleY(1.1);transform-origin:0 12px;">2</div>
<div class="t" style="left:88px;top:54px;font-size:13px;line-height:15px;color:#000;font-weight:normal;width:148px;text-align:left;transform:scaleY(1.1);transform-origin:0 12px;overflow:hidden;">Cleric</div>
<div class="t" style="left:241px;top:54px;font-size:13px;line-height:15px;color:#000;font-weight:normal;width:30px;text-align:left;transform:scaleY(1.1);transform-origin:0 12px;overflow:hidden;">16</div>
<div class="t" style="left:274px;top:54px;font-size:13px;line-height:15px;color:#000;font-weight:normal;width:18px;text-align:left;transform:scaleY(1.1);transform-origin:0 12px;overflow:hidden;">10</div>
<div class="t" style="left:295px;top:54px;font-size:13px;line-height:15px;color:#000;font-weight:normal;width:28px;text-align:left;transform:scaleY(1.1);transform-origin:0 12px;overflow:hidden;">12</div>
<div class="t" style="left:326px;top:54px;font-size:13px;line-height:15px;color:#000;font-weight:normal;width:80px;text-align:left;transform:scaleY(1.1);transform-origin:0 12px;overflow:hidden;">WIS</div>
<div class="t" style="left:409px;top:54px;font-size:13px;line-height:15px;color:#000;font-weight:normal;width:63px;text-align:left;transform:scaleY(1.1);transform-origin:0 12px;overflow:hidden;">WIS</div>
<div class="t" style="left:475px;top:54px;font-size:13px;line-height:15px;color:#000;font-weight:normal;width:87px;text-align:left;transform:scaleY(1.1);transform-origin:0 12px;overflow:hidden;">0x00</div>
<div class="t" style="left:565px;top:54px;font-size:13px;line-height:15px;color:#000;font-weight:normal;width:107px;text-align:left;transform:scaleY(1.1);transform-origin:0 12px;overflow:hidden;">0x0</div>
<div class="t" style="left:675px;top:54px;font-size:13px;line-height:15px;color:#000;font-weight:normal;width:64px;text-align:left;transform:scaleY(1.1);transform-origin:0 12px;overflow:hidden;">0</div>
<div class="t" style="left:742px;top:54px;font-size:13px;line-height:15px;color:#000;font-weight:normal;width:139px;text-align:left;transform:scaleY(1.1);transform-origin:0 12px;overflow:hidden;">CLS_PRES_DRALON</div>
<div class="t" style="left:884px;top:54px;font-size:13px;line-height:15px;color:#000;font-weight:normal;width:65px;text-align:left;transform:scaleY(1.1);transform-origin:0 12px;overflow:hidden;">0</div>
<div class="t" style="left:952px;top:54px;font-size:13px;line-height:15px;color:#000;font-weight:normal;width:81px;text-align:left;transform:scaleY(1.1);transform-origin:0 12px;overflow:hidden;">1</div>
<div class="t" style="left:19px;top:72px;font-size:13px;line-height:15px;color:#000;font-weight:normal;width:63px;text-align:right;transform:scaleY(1.1);transform-origin:0 12px;">3</div>
<div class="t" style="left:88px;top:72px;font-size:13px;line-height:15px;color:#000;font-weight:normal;width:148px;text-align:left;transform:scaleY(1.1);transform-origin:0 12px;overflow:hidden;">Druid</div>
<div class="t" style="left:241px;top:72px;font-size:13px;line-height:15px;color:#000;font-weight:normal;width:30px;text-align:left;transform:scaleY(1.1);transform-origin:0 12px;overflow:hidden;">16</div>
<div class="t" style="left:274px;top:72px;font-size:13px;line-height:15px;color:#000;font-weight:normal;width:18px;text-align:left;transform:scaleY(1.1);transform-origin:0 12px;overflow:hidden;">10</div>
<div class="t" style="left:295px;top:72px;font-size:13px;line-height:15px;color:#000;font-weight:normal;width:28px;text-align:left;transform:scaleY(1.1);transform-origin:0 12px;overflow:hidden;">12</div>
<div class="t" style="left:326px;top:72px;font-size:13px;line-height:15px;color:#000;font-weight:normal;width:80px;text-align:left;transform:scaleY(1.1);transform-origin:0 12px;overflow:hidden;">WIS</div>
<div class="t" style="left:409px;top:72px;font-size:13px;line-height:15px;color:#000;font-weight:normal;width:63px;text-align:left;transform:scaleY(1.1);transform-origin:0 12px;overflow:hidden;">WIS</div>
<div class="t" style="left:475px;top:72px;font-size:13px;line-height:15px;color:#000;font-weight:normal;width:87px;text-align:left;transform:scaleY(1.1);transform-origin:0 12px;overflow:hidden;">0x00</div>
<div class="t" style="left:565px;top:72px;font-size:13px;line-height:15px;color:#000;font-weight:normal;width:107px;text-align:left;transform:scaleY(1.1);transform-origin:0 12px;overflow:hidden;">0x0</div>
<div class="t" style="left:675px;top:72px;font-size:13px;line-height:15px;color:#000;font-weight:normal;width:64px;text-align:left;transform:scaleY(1.1);transform-origin:0 12px;overflow:hidden;">0</div>
<div class="t" style="left:742px;top:72px;font-size:13px;line-height:15px;color:#000;font-weight:normal;width:139px;text-align:left;transform:scaleY(1.1);transform-origin:0 12px;overflow:hidden;">CLS_PRES_SHAMAN</div>
<div class="t" style="left:884px;top:72px;font-size:13px;line-height:15px;color:#000;font-weight:normal;width:65px;text-align:left;transform:scaleY(1.1);transform-origin:0 12px;overflow:hidden;">0</div>
<div class="t" style="left:952px;top:72px;font-size:13px;line-height:15px;color:#000;font-weight:normal;width:81px;text-align:left;transform:scaleY(1.1);transform-origin:0 12px;overflow:hidden;">1</div>
<div class="t" style="left:19px;top:90px;font-size:13px;line-height:15px;color:#000;font-weight:normal;width:63px;text-align:right;transform:scaleY(1.1);transform-origin:0 12px;">4</div>
<div class="t" style="left:88px;top:90px;font-size:13px;line-height:15px;color:#000;font-weight:normal;width:148px;text-align:left;transform:scaleY(1.1);transform-origin:0 12px;overflow:hidden;">Fighter</div>
<div class="t" style="left:241px;top:90px;font-size:13px;line-height:15px;color:#000;font-weight:normal;width:30px;text-align:left;transform:scaleY(1.1);transform-origin:0 12px;overflow:hidden;">10</div>
<div class="t" style="left:274px;top:90px;font-size:13px;line-height:15px;color:#000;font-weight:normal;width:18px;text-align:left;transform:scaleY(1.1);transform-origin:0 12px;overflow:hidden;">14</div>
<div class="t" style="left:295px;top:90px;font-size:13px;line-height:15px;color:#000;font-weight:normal;width:28px;text-align:left;transform:scaleY(1.1);transform-origin:0 12px;overflow:hidden;">10</div>
<div class="t" style="left:326px;top:90px;font-size:13px;line-height:15px;color:#000;font-weight:normal;width:80px;text-align:left;transform:scaleY(1.1);transform-origin:0 12px;overflow:hidden;">STR</div>
<div class="t" style="left:409px;top:90px;font-size:13px;line-height:15px;color:#000;font-weight:normal;width:63px;text-align:left;transform:scaleY(1.1);transform-origin:0 12px;overflow:hidden;">****</div>
<div class="t" style="left:475px;top:90px;font-size:13px;line-height:15px;color:#000;font-weight:normal;width:87px;text-align:left;transform:scaleY(1.1);transform-origin:0 12px;overflow:hidden;">0x00</div>
<div class="t" style="left:565px;top:90px;font-size:13px;line-height:15px;color:#000;font-weight:normal;width:107px;text-align:left;transform:scaleY(1.1);transform-origin:0 12px;overflow:hidden;">0x1</div>
<div class="t" style="left:675px;top:90px;font-size:13px;line-height:15px;color:#000;font-weight:normal;width:64px;text-align:left;transform:scaleY(1.1);transform-origin:0 12px;overflow:hidden;">0</div>
<div class="t" style="left:742px;top:90px;font-size:13px;line-height:15px;color:#000;font-weight:normal;width:139px;text-align:left;transform:scaleY(1.1);transform-origin:0 12px;overflow:hidden;">****</div>
<div class="t" style="left:884px;top:90px;font-size:13px;line-height:15px;color:#000;font-weight:normal;width:65px;text-align:left;transform:scaleY(1.1);transform-origin:0 12px;overflow:hidden;">0</div>
<div class="t" style="left:952px;top:90px;font-size:13px;line-height:15px;color:#000;font-weight:normal;width:81px;text-align:left;transform:scaleY(1.1);transform-origin:0 12px;overflow:hidden;">1</div>
<svg class="a" style="left:7px;top:110px" width="7" height="11" viewBox="0 0 7 11"><path d="M0 0 L6 5.5 L0 11 Z" fill="#000"/></svg>
<div class="t" style="left:19px;top:108px;font-size:13px;line-height:15px;color:#000;font-weight:normal;width:63px;text-align:right;transform:scaleY(1.1);transform-origin:0 12px;">5</div>
<div class="t" style="left:88px;top:108px;font-size:13px;line-height:15px;color:#000;font-weight:normal;width:148px;text-align:left;transform:scaleY(1.1);transform-origin:0 12px;overflow:hidden;">Monk</div>
<div class="t" style="left:241px;top:108px;font-size:13px;line-height:15px;color:#000;font-weight:normal;width:30px;text-align:left;transform:scaleY(1.1);transform-origin:0 12px;overflow:hidden;">16</div>
<div class="t" style="left:274px;top:108px;font-size:13px;line-height:15px;color:#000;font-weight:normal;width:18px;text-align:left;transform:scaleY(1.1);transform-origin:0 12px;overflow:hidden;">10</div>
<div class="t" style="left:295px;top:108px;font-size:13px;line-height:15px;color:#000;font-weight:normal;width:28px;text-align:left;transform:scaleY(1.1);transform-origin:0 12px;overflow:hidden;">10</div>
<div class="t" style="left:326px;top:108px;font-size:13px;line-height:15px;color:#000;font-weight:normal;width:80px;text-align:left;transform:scaleY(1.1);transform-origin:0 12px;overflow:hidden;">DEX</div>
<div class="t" style="left:409px;top:108px;font-size:13px;line-height:15px;color:#000;font-weight:normal;width:63px;text-align:left;transform:scaleY(1.1);transform-origin:0 12px;overflow:hidden;">****</div>
<div style="left:473px;top:106px;width:89px;height:18px;background:#ff0000;box-shadow:inset 0 0 0 1px #d00000;"></div>
<div class="t" style="left:473px;top:107px;font-size:13px;line-height:15px;color:#ffc8c8;font-weight:normal;width:89px;text-align:center;transform:scaleY(1.1);transform-origin:0 12px;">0x05</div>
<div class="t" style="left:565px;top:108px;font-size:13px;line-height:15px;color:#000;font-weight:normal;width:107px;text-align:left;transform:scaleY(1.1);transform-origin:0 12px;overflow:hidden;">0x1</div>
<div class="t" style="left:675px;top:108px;font-size:13px;line-height:15px;color:#000;font-weight:normal;width:64px;text-align:left;transform:scaleY(1.1);transform-origin:0 12px;overflow:hidden;">0</div>
<div class="t" style="left:742px;top:108px;font-size:13px;line-height:15px;color:#000;font-weight:normal;width:139px;text-align:left;transform:scaleY(1.1);transform-origin:0 12px;overflow:hidden;">****</div>
<div class="t" style="left:884px;top:108px;font-size:13px;line-height:15px;color:#000;font-weight:normal;width:65px;text-align:left;transform:scaleY(1.1);transform-origin:0 12px;overflow:hidden;">0</div>
<div class="t" style="left:952px;top:108px;font-size:13px;line-height:15px;color:#000;font-weight:normal;width:81px;text-align:left;transform:scaleY(1.1);transform-origin:0 12px;overflow:hidden;">1</div>
<div class="t" style="left:19px;top:126px;font-size:13px;line-height:15px;color:#000;font-weight:normal;width:63px;text-align:right;transform:scaleY(1.1);transform-origin:0 12px;">6</div>
<div class="t" style="left:88px;top:126px;font-size:13px;line-height:15px;color:#000;font-weight:normal;width:148px;text-align:left;transform:scaleY(1.1);transform-origin:0 12px;overflow:hidden;">Paladin</div>
<div class="t" style="left:241px;top:126px;font-size:13px;line-height:15px;color:#000;font-weight:normal;width:30px;text-align:left;transform:scaleY(1.1);transform-origin:0 12px;overflow:hidden;">14</div>
<div class="t" style="left:274px;top:126px;font-size:13px;line-height:15px;color:#000;font-weight:normal;width:18px;text-align:left;transform:scaleY(1.1);transform-origin:0 12px;overflow:hidden;">10</div>
<div class="t" style="left:295px;top:126px;font-size:13px;line-height:15px;color:#000;font-weight:normal;width:28px;text-align:left;transform:scaleY(1.1);transform-origin:0 12px;overflow:hidden;">15</div>
<div class="t" style="left:326px;top:126px;font-size:13px;line-height:15px;color:#000;font-weight:normal;width:80px;text-align:left;transform:scaleY(1.1);transform-origin:0 12px;overflow:hidden;">WIS</div>
<div class="t" style="left:409px;top:126px;font-size:13px;line-height:15px;color:#000;font-weight:normal;width:63px;text-align:left;transform:scaleY(1.1);transform-origin:0 12px;overflow:hidden;">WIS</div>
<div class="t" style="left:475px;top:126px;font-size:13px;line-height:15px;color:#000;font-weight:normal;width:87px;text-align:left;transform:scaleY(1.1);transform-origin:0 12px;overflow:hidden;">0x15</div>
<div class="t" style="left:565px;top:126px;font-size:13px;line-height:15px;color:#000;font-weight:normal;width:107px;text-align:left;transform:scaleY(1.1);transform-origin:0 12px;overflow:hidden;">0x0</div>
<div class="t" style="left:675px;top:126px;font-size:13px;line-height:15px;color:#000;font-weight:normal;width:64px;text-align:left;transform:scaleY(1.1);transform-origin:0 12px;overflow:hidden;">0</div>
<div class="t" style="left:742px;top:126px;font-size:13px;line-height:15px;color:#000;font-weight:normal;width:139px;text-align:left;transform:scaleY(1.1);transform-origin:0 12px;overflow:hidden;">****</div>
<div class="t" style="left:884px;top:126px;font-size:13px;line-height:15px;color:#000;font-weight:normal;width:65px;text-align:left;transform:scaleY(1.1);transform-origin:0 12px;overflow:hidden;">0</div>
<div class="t" style="left:952px;top:126px;font-size:13px;line-height:15px;color:#000;font-weight:normal;width:81px;text-align:left;transform:scaleY(1.1);transform-origin:0 12px;overflow:hidden;">1</div>
<div class="t" style="left:19px;top:144px;font-size:13px;line-height:15px;color:#000;font-weight:normal;width:63px;text-align:right;transform:scaleY(1.1);transform-origin:0 12px;">7</div>
<div class="t" style="left:88px;top:144px;font-size:13px;line-height:15px;color:#000;font-weight:normal;width:148px;text-align:left;transform:scaleY(1.1);transform-origin:0 12px;overflow:hidden;">Ranger</div>
<div class="t" style="left:241px;top:144px;font-size:13px;line-height:15px;color:#000;font-weight:normal;width:30px;text-align:left;transform:scaleY(1.1);transform-origin:0 12px;overflow:hidden;">14</div>
<div class="t" style="left:274px;top:144px;font-size:13px;line-height:15px;color:#000;font-weight:normal;width:18px;text-align:left;transform:scaleY(1.1);transform-origin:0 12px;overflow:hidden;">10</div>
<div class="t" style="left:295px;top:144px;font-size:13px;line-height:15px;color:#000;font-weight:normal;width:28px;text-align:left;transform:scaleY(1.1);transform-origin:0 12px;overflow:hidden;">10</div>
<div class="t" style="left:326px;top:144px;font-size:13px;line-height:15px;color:#000;font-weight:normal;width:80px;text-align:left;transform:scaleY(1.1);transform-origin:0 12px;overflow:hidden;">WIS</div>
<div class="t" style="left:409px;top:144px;font-size:13px;line-height:15px;color:#000;font-weight:normal;width:63px;text-align:left;transform:scaleY(1.1);transform-origin:0 12px;overflow:hidden;">WIS</div>
<div class="t" style="left:475px;top:144px;font-size:13px;line-height:15px;color:#000;font-weight:normal;width:87px;text-align:left;transform:scaleY(1.1);transform-origin:0 12px;overflow:hidden;">0x00</div>
<div class="t" style="left:565px;top:144px;font-size:13px;line-height:15px;color:#000;font-weight:normal;width:107px;text-align:left;transform:scaleY(1.1);transform-origin:0 12px;overflow:hidden;">0x0</div>
<div class="t" style="left:675px;top:144px;font-size:13px;line-height:15px;color:#000;font-weight:normal;width:64px;text-align:left;transform:scaleY(1.1);transform-origin:0 12px;overflow:hidden;">0</div>
<div class="t" style="left:742px;top:144px;font-size:13px;line-height:15px;color:#000;font-weight:normal;width:139px;text-align:left;transform:scaleY(1.1);transform-origin:0 12px;overflow:hidden;">****</div>
<div class="t" style="left:884px;top:144px;font-size:13px;line-height:15px;color:#000;font-weight:normal;width:65px;text-align:left;transform:scaleY(1.1);transform-origin:0 12px;overflow:hidden;">0</div>
<div class="t" style="left:952px;top:144px;font-size:13px;line-height:15px;color:#000;font-weight:normal;width:81px;text-align:left;transform:scaleY(1.1);transform-origin:0 12px;overflow:hidden;">1</div>
<div class="t" style="left:19px;top:162px;font-size:13px;line-height:15px;color:#000;font-weight:normal;width:63px;text-align:right;transform:scaleY(1.1);transform-origin:0 12px;">8</div>
<div class="t" style="left:88px;top:162px;font-size:13px;line-height:15px;color:#000;font-weight:normal;width:148px;text-align:left;transform:scaleY(1.1);transform-origin:0 12px;overflow:hidden;">Rogue</div>
<div class="t" style="left:241px;top:162px;font-size:13px;line-height:15px;color:#000;font-weight:normal;width:30px;text-align:left;transform:scaleY(1.1);transform-origin:0 12px;overflow:hidden;">10</div>
<div class="t" style="left:274px;top:162px;font-size:13px;line-height:15px;color:#000;font-weight:normal;width:18px;text-align:left;transform:scaleY(1.1);transform-origin:0 12px;overflow:hidden;">14</div>
<div class="t" style="left:295px;top:162px;font-size:13px;line-height:15px;color:#000;font-weight:normal;width:28px;text-align:left;transform:scaleY(1.1);transform-origin:0 12px;overflow:hidden;">12</div>
<div class="t" style="left:326px;top:162px;font-size:13px;line-height:15px;color:#000;font-weight:normal;width:80px;text-align:left;transform:scaleY(1.1);transform-origin:0 12px;overflow:hidden;">DEX</div>
<div class="t" style="left:409px;top:162px;font-size:13px;line-height:15px;color:#000;font-weight:normal;width:63px;text-align:left;transform:scaleY(1.1);transform-origin:0 12px;overflow:hidden;">****</div>
<div class="t" style="left:475px;top:162px;font-size:13px;line-height:15px;color:#000;font-weight:normal;width:87px;text-align:left;transform:scaleY(1.1);transform-origin:0 12px;overflow:hidden;">0x00</div>
<div class="t" style="left:565px;top:162px;font-size:13px;line-height:15px;color:#000;font-weight:normal;width:107px;text-align:left;transform:scaleY(1.1);transform-origin:0 12px;overflow:hidden;">0x0</div>
<div class="t" style="left:675px;top:162px;font-size:13px;line-height:15px;color:#000;font-weight:normal;width:64px;text-align:left;transform:scaleY(1.1);transform-origin:0 12px;overflow:hidden;">0</div>
<div class="t" style="left:742px;top:162px;font-size:13px;line-height:15px;color:#000;font-weight:normal;width:139px;text-align:left;transform:scaleY(1.1);transform-origin:0 12px;overflow:hidden;">****</div>
<div class="t" style="left:884px;top:162px;font-size:13px;line-height:15px;color:#000;font-weight:normal;width:65px;text-align:left;transform:scaleY(1.1);transform-origin:0 12px;overflow:hidden;">0</div>
<div class="t" style="left:952px;top:162px;font-size:13px;line-height:15px;color:#000;font-weight:normal;width:81px;text-align:left;transform:scaleY(1.1);transform-origin:0 12px;overflow:hidden;">1</div>
<div class="t" style="left:19px;top:180px;font-size:13px;line-height:15px;color:#000;font-weight:normal;width:63px;text-align:right;transform:scaleY(1.1);transform-origin:0 12px;">9</div>
<div class="t" style="left:88px;top:180px;font-size:13px;line-height:15px;color:#000;font-weight:normal;width:148px;text-align:left;transform:scaleY(1.1);transform-origin:0 12px;overflow:hidden;">Sorcerer</div>
<div class="t" style="left:241px;top:180px;font-size:13px;line-height:15px;color:#000;font-weight:normal;width:30px;text-align:left;transform:scaleY(1.1);transform-origin:0 12px;overflow:hidden;">10</div>
<div class="t" style="left:274px;top:180px;font-size:13px;line-height:15px;color:#000;font-weight:normal;width:18px;text-align:left;transform:scaleY(1.1);transform-origin:0 12px;overflow:hidden;">17</div>
<div class="t" style="left:295px;top:180px;font-size:13px;line-height:15px;color:#000;font-weight:normal;width:28px;text-align:left;transform:scaleY(1.1);transform-origin:0 12px;overflow:hidden;">10</div>
<div class="t" style="left:326px;top:180px;font-size:13px;line-height:15px;color:#000;font-weight:normal;width:80px;text-align:left;transform:scaleY(1.1);transform-origin:0 12px;overflow:hidden;">INT</div>
<div class="t" style="left:409px;top:180px;font-size:13px;line-height:15px;color:#000;font-weight:normal;width:63px;text-align:left;transform:scaleY(1.1);transform-origin:0 12px;overflow:hidden;">CHA</div>
<div class="t" style="left:475px;top:180px;font-size:13px;line-height:15px;color:#000;font-weight:normal;width:87px;text-align:left;transform:scaleY(1.1);transform-origin:0 12px;overflow:hidden;">0x00</div>
<div class="t" style="left:565px;top:180px;font-size:13px;line-height:15px;color:#000;font-weight:normal;width:107px;text-align:left;transform:scaleY(1.1);transform-origin:0 12px;overflow:hidden;">0x0</div>
<div class="t" style="left:675px;top:180px;font-size:13px;line-height:15px;color:#000;font-weight:normal;width:64px;text-align:left;transform:scaleY(1.1);transform-origin:0 12px;overflow:hidden;">0</div>
<div class="t" style="left:742px;top:180px;font-size:13px;line-height:15px;color:#000;font-weight:normal;width:139px;text-align:left;transform:scaleY(1.1);transform-origin:0 12px;overflow:hidden;">****</div>
<div class="t" style="left:884px;top:180px;font-size:13px;line-height:15px;color:#000;font-weight:normal;width:65px;text-align:left;transform:scaleY(1.1);transform-origin:0 12px;overflow:hidden;">0</div>
<div class="t" style="left:952px;top:180px;font-size:13px;line-height:15px;color:#000;font-weight:normal;width:81px;text-align:left;transform:scaleY(1.1);transform-origin:0 12px;overflow:hidden;">1</div>
<div class="t" style="left:19px;top:198px;font-size:13px;line-height:15px;color:#000;font-weight:normal;width:63px;text-align:right;transform:scaleY(1.1);transform-origin:0 12px;">10</div>
<div class="t" style="left:88px;top:198px;font-size:13px;line-height:15px;color:#000;font-weight:normal;width:148px;text-align:left;transform:scaleY(1.1);transform-origin:0 12px;overflow:hidden;">Wizard</div>
<div class="t" style="left:241px;top:198px;font-size:13px;line-height:15px;color:#000;font-weight:normal;width:30px;text-align:left;transform:scaleY(1.1);transform-origin:0 12px;overflow:hidden;">11</div>
<div class="t" style="left:274px;top:198px;font-size:13px;line-height:15px;color:#000;font-weight:normal;width:18px;text-align:left;transform:scaleY(1.1);transform-origin:0 12px;overflow:hidden;">17</div>
<div class="t" style="left:295px;top:198px;font-size:13px;line-height:15px;color:#000;font-weight:normal;width:28px;text-align:left;transform:scaleY(1.1);transform-origin:0 12px;overflow:hidden;">10</div>
<div class="t" style="left:326px;top:198px;font-size:13px;line-height:15px;color:#000;font-weight:normal;width:80px;text-align:left;transform:scaleY(1.1);transform-origin:0 12px;overflow:hidden;">INT</div>
<div class="t" style="left:409px;top:198px;font-size:13px;line-height:15px;color:#000;font-weight:normal;width:63px;text-align:left;transform:scaleY(1.1);transform-origin:0 12px;overflow:hidden;">INT</div>
<div class="t" style="left:475px;top:198px;font-size:13px;line-height:15px;color:#000;font-weight:normal;width:87px;text-align:left;transform:scaleY(1.1);transform-origin:0 12px;overflow:hidden;">0x00</div>
<div class="t" style="left:565px;top:198px;font-size:13px;line-height:15px;color:#000;font-weight:normal;width:107px;text-align:left;transform:scaleY(1.1);transform-origin:0 12px;overflow:hidden;">0x0</div>
<div class="t" style="left:675px;top:198px;font-size:13px;line-height:15px;color:#000;font-weight:normal;width:64px;text-align:left;transform:scaleY(1.1);transform-origin:0 12px;overflow:hidden;">0</div>
<div class="t" style="left:742px;top:198px;font-size:13px;line-height:15px;color:#000;font-weight:normal;width:139px;text-align:left;transform:scaleY(1.1);transform-origin:0 12px;overflow:hidden;">****</div>
<div class="t" style="left:884px;top:198px;font-size:13px;line-height:15px;color:#000;font-weight:normal;width:65px;text-align:left;transform:scaleY(1.1);transform-origin:0 12px;overflow:hidden;">0</div>
<div class="t" style="left:952px;top:198px;font-size:13px;line-height:15px;color:#000;font-weight:normal;width:81px;text-align:left;transform:scaleY(1.1);transform-origin:0 12px;overflow:hidden;">1</div>
<div class="t" style="left:19px;top:216px;font-size:13px;line-height:15px;color:#000;font-weight:normal;width:63px;text-align:right;transform:scaleY(1.1);transform-origin:0 12px;">11</div>
<div class="t" style="left:88px;top:216px;font-size:13px;line-height:15px;color:#000;font-weight:normal;width:148px;text-align:left;transform:scaleY(1.1);transform-origin:0 12px;overflow:hidden;">Aberration</div>
<div class="t" style="left:241px;top:216px;font-size:13px;line-height:15px;color:#000;font-weight:normal;width:30px;text-align:left;transform:scaleY(1.1);transform-origin:0 12px;overflow:hidden;">14</div>
<div class="t" style="left:274px;top:216px;font-size:13px;line-height:15px;color:#000;font-weight:normal;width:18px;text-align:left;transform:scaleY(1.1);transform-origin:0 12px;overflow:hidden;">3</div>
<div class="t" style="left:295px;top:216px;font-size:13px;line-height:15px;color:#000;font-weight:normal;width:28px;text-align:left;transform:scaleY(1.1);transform-origin:0 12px;overflow:hidden;">5</div>
<div class="t" style="left:326px;top:216px;font-size:13px;line-height:15px;color:#000;font-weight:normal;width:80px;text-align:left;transform:scaleY(1.1);transform-origin:0 12px;overflow:hidden;">STR</div>
<div class="t" style="left:409px;top:216px;font-size:13px;line-height:15px;color:#000;font-weight:normal;width:63px;text-align:left;transform:scaleY(1.1);transform-origin:0 12px;overflow:hidden;">****</div>
<div class="t" style="left:475px;top:216px;font-size:13px;line-height:15px;color:#000;font-weight:normal;width:87px;text-align:left;transform:scaleY(1.1);transform-origin:0 12px;overflow:hidden;">0x00</div>
<div class="t" style="left:565px;top:216px;font-size:13px;line-height:15px;color:#000;font-weight:normal;width:107px;text-align:left;transform:scaleY(1.1);transform-origin:0 12px;overflow:hidden;">0x0</div>
<div class="t" style="left:675px;top:216px;font-size:13px;line-height:15px;color:#000;font-weight:normal;width:64px;text-align:left;transform:scaleY(1.1);transform-origin:0 12px;overflow:hidden;">0</div>
<div class="t" style="left:742px;top:216px;font-size:13px;line-height:15px;color:#000;font-weight:normal;width:139px;text-align:left;transform:scaleY(1.1);transform-origin:0 12px;overflow:hidden;">****</div>
<div class="t" style="left:884px;top:216px;font-size:13px;line-height:15px;color:#000;font-weight:normal;width:65px;text-align:left;transform:scaleY(1.1);transform-origin:0 12px;overflow:hidden;">0</div>
<div class="t" style="left:952px;top:216px;font-size:13px;line-height:15px;color:#000;font-weight:normal;width:81px;text-align:left;transform:scaleY(1.1);transform-origin:0 12px;overflow:hidden;">0</div>
<div class="t" style="left:19px;top:234px;font-size:13px;line-height:15px;color:#000;font-weight:normal;width:63px;text-align:right;transform:scaleY(1.1);transform-origin:0 12px;">12</div>
<div class="t" style="left:88px;top:234px;font-size:13px;line-height:15px;color:#000;font-weight:normal;width:148px;text-align:left;transform:scaleY(1.1);transform-origin:0 12px;overflow:hidden;">Animal</div>
<div class="t" style="left:241px;top:234px;font-size:13px;line-height:15px;color:#000;font-weight:normal;width:30px;text-align:left;transform:scaleY(1.1);transform-origin:0 12px;overflow:hidden;">12</div>
<div class="t" style="left:274px;top:234px;font-size:13px;line-height:15px;color:#000;font-weight:normal;width:18px;text-align:left;transform:scaleY(1.1);transform-origin:0 12px;overflow:hidden;">2</div>
<div class="t" style="left:295px;top:234px;font-size:13px;line-height:15px;color:#000;font-weight:normal;width:28px;text-align:left;transform:scaleY(1.1);transform-origin:0 12px;overflow:hidden;">6</div>
<div class="t" style="left:326px;top:234px;font-size:13px;line-height:15px;color:#000;font-weight:normal;width:80px;text-align:left;transform:scaleY(1.1);transform-origin:0 12px;overflow:hidden;">STR</div>
<div class="t" style="left:409px;top:234px;font-size:13px;line-height:15px;color:#000;font-weight:normal;width:63px;text-align:left;transform:scaleY(1.1);transform-origin:0 12px;overflow:hidden;">****</div>
<div class="t" style="left:475px;top:234px;font-size:13px;line-height:15px;color:#000;font-weight:normal;width:87px;text-align:left;transform:scaleY(1.1);transform-origin:0 12px;overflow:hidden;">0x00</div>
<div class="t" style="left:565px;top:234px;font-size:13px;line-height:15px;color:#000;font-weight:normal;width:107px;text-align:left;transform:scaleY(1.1);transform-origin:0 12px;overflow:hidden;">0x0</div>
<div class="t" style="left:675px;top:234px;font-size:13px;line-height:15px;color:#000;font-weight:normal;width:64px;text-align:left;transform:scaleY(1.1);transform-origin:0 12px;overflow:hidden;">0</div>
<div class="t" style="left:742px;top:234px;font-size:13px;line-height:15px;color:#000;font-weight:normal;width:139px;text-align:left;transform:scaleY(1.1);transform-origin:0 12px;overflow:hidden;">****</div>
<div class="t" style="left:884px;top:234px;font-size:13px;line-height:15px;color:#000;font-weight:normal;width:65px;text-align:left;transform:scaleY(1.1);transform-origin:0 12px;overflow:hidden;">0</div>
<div class="t" style="left:952px;top:234px;font-size:13px;line-height:15px;color:#000;font-weight:normal;width:81px;text-align:left;transform:scaleY(1.1);transform-origin:0 12px;overflow:hidden;">0</div>
</div>
<div style="left:1002px;top:88px;width:16px;height:247px;background:repeating-conic-gradient(#fff 0 25%,#c0c0c0 0 50%) 0 0/2px 2px;box-shadow:inset -1px 0 #000;"></div>
<div style="left:1002px;top:88px;width:16px;height:16px;background:#c0c0c0;box-shadow:inset -1px -1px #000,inset 1px 1px #c8c8c8,inset -2px -2px #808080,inset 2px 2px #fff;"></div>
<svg class="a" style="left:1006px;top:94px" width="7" height="4" viewBox="0 0 7 4"><path d="M3.5 0 L7 4 H0 Z" fill="#000"/></svg>
<div style="left:1002px;top:104px;width:16px;height:16px;background:#c0c0c0;box-shadow:inset -1px -1px #000,inset 1px 1px #c8c8c8,inset -2px -2px #808080,inset 2px 2px #fff;"></div>
<div style="left:1002px;top:319px;width:16px;height:16px;background:#c0c0c0;box-shadow:inset -1px -1px #000,inset 1px 1px #c8c8c8,inset -2px -2px #808080,inset 2px 2px #fff;"></div>
<svg class="a" style="left:1006px;top:325px" width="7" height="4" viewBox="0 0 7 4"><path d="M0 0 H7 L3.5 4 Z" fill="#000"/></svg>
<div style="left:7px;top:335px;width:239px;height:16px;background:#c0c0c0;box-shadow:inset 0 1px #000,inset 0 -1px #000;"></div>
<div style="left:246px;top:335px;width:756px;height:16px;background:repeating-conic-gradient(#fff 0 25%,#c0c0c0 0 50%) 0 0/2px 2px;box-shadow:inset 0 -1px #000;"></div>
<div style="left:246px;top:335px;width:16px;height:16px;background:#c0c0c0;box-shadow:inset -1px -1px #000,inset 1px 1px #c8c8c8,inset -2px -2px #808080,inset 2px 2px #fff;"></div>
<svg class="a" style="left:251px;top:339px" width="4" height="7" viewBox="0 0 4 7"><path d="M4 0 V7 L0 3.5 Z" fill="#000"/></svg>
<div style="left:655px;top:335px;width:16px;height:16px;background:#c0c0c0;box-shadow:inset -1px -1px #000,inset 1px 1px #c8c8c8,inset -2px -2px #808080,inset 2px 2px #fff;"></div>
<div style="left:986px;top:335px;width:16px;height:16px;background:#c0c0c0;box-shadow:inset -1px -1px #000,inset 1px 1px #c8c8c8,inset -2px -2px #808080,inset 2px 2px #fff;"></div>
<svg class="a" style="left:992px;top:339px" width="4" height="7" viewBox="0 0 4 7"><path d="M0 0 V7 L4 3.5 Z" fill="#000"/></svg>
<div style="left:1002px;top:335px;width:16px;height:16px;background:#c0c0c0;box-shadow:inset -1px -1px #000;"></div>
<div style="left:6px;top:353px;width:97px;height:23px;box-shadow:inset 1px 1px #808080,inset -1px -1px #fff;"></div>
<div class="t" style="left:7px;top:358px;font-size:11px;line-height:13px;color:#000;font-weight:normal;width:97px;text-align:center;transform:scaleY(1);transform-origin:0 10px;">Custom 2DA</div>
<div style="left:105px;top:353px;width:96px;height:23px;box-shadow:inset 1px 1px #808080,inset -1px -1px #fff;"></div>
<div class="t" style="left:106px;top:358px;font-size:11px;line-height:13px;color:#000;font-weight:normal;width:96px;text-align:center;transform:scaleY(1);transform-origin:0 10px;">Unchanged</div>
<div style="left:202px;top:353px;width:798px;height:23px;box-shadow:inset 1px 1px #808080,inset -1px -1px #fff;"></div>
<svg class="a" style="left:1005px;top:363px" width="12" height="12" viewBox="0 0 12 12"><path d="M11.5 0.5 L0.5 11.5 M11.5 4.5 L4.5 11.5 M11.5 8.5 L8.5 11.5" stroke="#fff" stroke-width="1"/><path d="M11.5 1.5 L1.5 11.5 M11.5 2.5 L2.5 11.5 M11.5 5.5 L5.5 11.5 M11.5 6.5 L6.5 11.5 M11.5 9.5 L9.5 11.5 M11.5 10.5 L10.5 11.5" stroke="#808080" stroke-width="1"/></svg>
<div style="left:2px;top:380px;width:1020px;height:316px;background:#c0c0c0;box-shadow:inset -1px -1px #000,inset 1px 1px #dfdfdf,inset -2px -2px #808080,inset 2px 2px #fff;"></div>
<div style="left:6px;top:384px;width:1012px;height:18px;background:linear-gradient(to right,#808080,#c0c0c0);"></div>
<svg class="a" style="left:6px;top:383px" width="18" height="17" viewBox="0 0 18 17"><rect x="4" y="3" width="2" height="1" fill="#7a2a1e"/><rect x="7" y="3" width="1" height="1" fill="#e4a494"/><rect x="8" y="3" width="2" height="1" fill="#f4cbbd"/><rect x="10" y="3" width="2" height="1" fill="#e4a494"/><rect x="12" y="3" width="1" height="1" fill="#b4685a"/><rect x="13" y="3" width="1" height="1" fill="#e4a494"/><rect x="14" y="3" width="1" height="1" fill="#f4cbbd"/><rect x="15" y="3" width="1" height="1" fill="#e4a494"/><rect x="17" y="3" width="1" height="1" fill="#f4ecec"/><rect x="2" y="4" width="1" height="1" fill="#f4ecec"/><rect x="3" y="4" width="3" height="1" fill="#7a2a1e"/><rect x="6" y="4" width="1" height="1" fill="#b4685a"/><rect x="8" y="4" width="1" height="1" fill="#e4a494"/><rect x="9" y="4" width="1" height="1" fill="#f4cbbd"/><rect x="10" y="4" width="1" height="1" fill="#b4685a"/><rect x="11" y="4" width="2" height="1" fill="#e4a494"/><rect x="13" y="4" width="2" height="1" fill="#f4cbbd"/><rect x="15" y="4" width="2" height="1" fill="#e4a494"/><rect x="17" y="4" width="1" height="1" fill="#7a2a1e"/><rect x="3" y="5" width="1" height="1" fill="#e4a494"/><rect x="4" y="5" width="1" height="1" fill="#7a2a1e"/><rect x="5" y="5" width="2" height="1" fill="#e4a494"/><rect x="8" y="5" width="2" height="1" fill="#e4a494"/><rect x="10" y="5" width="1" height="1" fill="#f4cbbd"/><rect x="11" y="5" width="1" height="1" fill="#e4a494"/><rect x="12" y="5" width="2" height="1" fill="#7a2a1e"/><rect x="14" y="5" width="2" height="1" fill="#e4a494"/><rect x="16" y="5" width="1" height="1" fill="#7a2a1e"/><rect x="2" y="6" width="1" height="1" fill="#e4a494"/><rect x="3" y="6" width="1" height="1" fill="#f4cbbd"/><rect x="4" y="6" width="1" height="1" fill="#7a2a1e"/><rect x="5" y="6" width="3" height="1" fill="#e4a494"/><rect x="8" y="6" width="2" height="1" fill="#f4cbbd"/><rect x="10" y="6" width="2" height="1" fill="#e4a494"/><rect x="12" y="6" width="1" height="1" fill="#b4685a"/><rect x="13" y="6" width="2" height="1" fill="#7a2a1e"/><rect x="15" y="6" width="1" height="1" fill="#b4685a"/><rect x="16" y="6" width="1" height="1" fill="#7a2a1e"/><rect x="2" y="7" width="2" height="1" fill="#e4a494"/><rect x="4" y="7" width="1" height="1" fill="#b4685a"/><rect x="5" y="7" width="2" height="1" fill="#7a2a1e"/><rect x="7" y="7" width="1" height="1" fill="#e4a494"/><rect x="8" y="7" width="1" height="1" fill="#f4cbbd"/><rect x="9" y="7" width="2" height="1" fill="#e4a494"/><rect x="11" y="7" width="2" height="1" fill="#f4cbbd"/><rect x="14" y="7" width="1" height="1" fill="#7a2a1e"/><rect x="15" y="7" width="1" height="1" fill="#b4685a"/><rect x="3" y="8" width="2" height="1" fill="#e4a494"/><rect x="6" y="8" width="3" height="1" fill="#f4cbbd"/><rect x="10" y="8" width="3" height="1" fill="#e4a494"/><rect x="14" y="8" width="1" height="1" fill="#f4cbbd"/><rect x="4" y="9" width="2" height="1" fill="#e4a494"/><rect x="6" y="9" width="2" height="1" fill="#f4cbbd"/><rect x="8" y="9" width="1" height="1" fill="#b4685a"/><rect x="9" y="9" width="1" height="1" fill="#7a2a1e"/><rect x="10" y="9" width="3" height="1" fill="#e4a494"/><rect x="4" y="10" width="1" height="1" fill="#e4a494"/><rect x="5" y="10" width="1" height="1" fill="#b4685a"/><rect x="6" y="10" width="2" height="1" fill="#7a2a1e"/><rect x="8" y="10" width="2" height="1" fill="#e4a494"/><rect x="10" y="10" width="1" height="1" fill="#f4cbbd"/><rect x="11" y="10" width="1" height="1" fill="#e4a494"/><rect x="4" y="11" width="1" height="1" fill="#f4cbbd"/><rect x="6" y="11" width="1" height="1" fill="#b4685a"/><rect x="7" y="11" width="2" height="1" fill="#e4a494"/><rect x="9" y="11" width="1" height="1" fill="#f4cbbd"/><rect x="10" y="11" width="1" height="1" fill="#b4685a"/><rect x="11" y="11" width="1" height="1" fill="#7a2a1e"/><rect x="12" y="11" width="1" height="1" fill="#e4a494"/><rect x="6" y="12" width="2" height="1" fill="#e4a494"/><rect x="10" y="12" width="1" height="1" fill="#b4685a"/><rect x="11" y="12" width="1" height="1" fill="#7a2a1e"/><rect x="12" y="12" width="1" height="1" fill="#f4ecec"/><rect x="10" y="13" width="1" height="1" fill="#b4685a"/><rect x="11" y="13" width="1" height="1" fill="#7a2a1e"/><rect x="12" y="13" width="1" height="1" fill="#f4cbbd"/><rect x="10" y="14" width="1" height="1" fill="#b4685a"/><rect x="11" y="14" width="1" height="1" fill="#7a2a1e"/><rect x="12" y="14" width="1" height="1" fill="#f4ecec"/><rect x="10" y="15" width="1" height="1" fill="#b4685a"/><rect x="11" y="15" width="1" height="1" fill="#7a2a1e"/><rect x="11" y="16" width="1" height="1" fill="#7a2a1e"/></svg>
<div class="t" style="left:26px;top:386px;font-size:12px;line-height:14px;color:#c0c0c0;font-weight:bold;-webkit-text-stroke:0;">Dialog.TLK_Ori</div>
<div style="left:966px;top:386px;width:16px;height:14px;background:#c0c0c0;box-shadow:inset -1px -1px #000,inset 1px 1px #dfdfdf,inset -2px -2px #808080,inset 2px 2px #fff;"></div>
<div style="left:970px;top:395px;width:6px;height:2px;background:#000;"></div>
<div style="left:982px;top:386px;width:16px;height:14px;background:#c0c0c0;box-shadow:inset -1px -1px #000,inset 1px 1px #dfdfdf,inset -2px -2px #808080,inset 2px 2px #fff;"></div>
<div style="left:985px;top:388px;width:9px;height:9px;border:1px solid #000;border-top-width:2px;box-sizing:border-box;"></div>
<div style="left:1000px;top:386px;width:16px;height:14px;background:#c0c0c0;box-shadow:inset -1px -1px #000,inset 1px 1px #dfdfdf,inset -2px -2px #808080,inset 2px 2px #fff;"></div>
<svg class="a" style="left:1004px;top:389px" width="8" height="7" viewBox="0 0 8 7"><path d="M0.5 0 L4 3.5 L7.5 0 M0.5 7 L4 3.5 L7.5 7" stroke="#000" stroke-width="1.5" fill="none"/></svg>
<div style="left:6px;top:403px;width:1012px;height:264px;background:#fff;border:1px solid #000;"></div>
<div style="left:7px;top:404px;width:995px;height:262px;overflow:hidden">
<div style="left:0px;top:0px;width:18px;height:16px;background:#c0c0c0;box-shadow:inset 1px 1px #fff;"></div>
<div style="left:19px;top:0px;width:66px;height:16px;background:#c0c0c0;box-shadow:inset 1px 1px #fff;"></div>
<div style="left:88px;top:0px;width:945px;height:16px;background:#c0c0c0;box-shadow:inset 1px 1px #fff;"></div>
<div style="left:0px;top:16px;width:1200px;height:1px;background:#000;"></div>
<div style="left:0px;top:17px;width:18px;height:17px;background:#c0c0c0;box-shadow:inset 1px 1px #fff;"></div>
<div style="left:0px;top:34px;width:18px;height:1px;background:#000;"></div>
<div style="left:19px;top:34px;width:1200px;height:1px;background:#808080;"></div>
<div style="left:0px;top:35px;width:18px;height:17px;background:#c0c0c0;box-shadow:inset 1px 1px #fff;"></div>
<div style="left:0px;top:52px;width:18px;height:1px;background:#000;"></div>
<div style="left:19px;top:52px;width:1200px;height:1px;background:#808080;"></div>
<div style="left:0px;top:53px;width:18px;height:17px;background:#c0c0c0;box-shadow:inset 1px 1px #fff;"></div>
<div style="left:0px;top:70px;width:18px;height:1px;background:#000;"></div>
<div style="left:19px;top:70px;width:1200px;height:1px;background:#808080;"></div>
<div style="left:0px;top:71px;width:18px;height:17px;background:#c0c0c0;box-shadow:inset 1px 1px #fff;"></div>
<div style="left:0px;top:88px;width:18px;height:1px;background:#000;"></div>
<div style="left:19px;top:88px;width:1200px;height:1px;background:#808080;"></div>
<div style="left:0px;top:89px;width:18px;height:17px;background:#c0c0c0;box-shadow:inset 1px 1px #fff;"></div>
<div style="left:0px;top:106px;width:18px;height:1px;background:#000;"></div>
<div style="left:19px;top:106px;width:1200px;height:1px;background:#808080;"></div>
<div style="left:0px;top:107px;width:18px;height:17px;background:#c0c0c0;box-shadow:inset 1px 1px #fff;"></div>
<div style="left:0px;top:124px;width:18px;height:1px;background:#000;"></div>
<div style="left:19px;top:124px;width:1200px;height:1px;background:#808080;"></div>
<div style="left:0px;top:125px;width:18px;height:17px;background:#c0c0c0;box-shadow:inset 1px 1px #fff;"></div>
<div style="left:0px;top:142px;width:18px;height:1px;background:#000;"></div>
<div style="left:19px;top:142px;width:1200px;height:1px;background:#808080;"></div>
<div style="left:0px;top:143px;width:18px;height:17px;background:#c0c0c0;box-shadow:inset 1px 1px #fff;"></div>
<div style="left:0px;top:160px;width:18px;height:1px;background:#000;"></div>
<div style="left:19px;top:160px;width:1200px;height:1px;background:#808080;"></div>
<div style="left:0px;top:161px;width:18px;height:17px;background:#c0c0c0;box-shadow:inset 1px 1px #fff;"></div>
<div style="left:0px;top:178px;width:18px;height:1px;background:#000;"></div>
<div style="left:19px;top:178px;width:1200px;height:1px;background:#808080;"></div>
<div style="left:0px;top:179px;width:18px;height:17px;background:#c0c0c0;box-shadow:inset 1px 1px #fff;"></div>
<div style="left:0px;top:196px;width:18px;height:1px;background:#000;"></div>
<div style="left:19px;top:196px;width:1200px;height:1px;background:#808080;"></div>
<div style="left:0px;top:197px;width:18px;height:17px;background:#c0c0c0;box-shadow:inset 1px 1px #fff;"></div>
<div style="left:0px;top:214px;width:18px;height:1px;background:#000;"></div>
<div style="left:19px;top:214px;width:1200px;height:1px;background:#808080;"></div>
<div style="left:0px;top:215px;width:18px;height:17px;background:#c0c0c0;box-shadow:inset 1px 1px #fff;"></div>
<div style="left:0px;top:232px;width:18px;height:1px;background:#000;"></div>
<div style="left:19px;top:232px;width:1200px;height:1px;background:#808080;"></div>
<div style="left:0px;top:233px;width:18px;height:17px;background:#c0c0c0;box-shadow:inset 1px 1px #fff;"></div>
<div style="left:0px;top:250px;width:18px;height:1px;background:#000;"></div>
<div style="left:19px;top:250px;width:1200px;height:1px;background:#808080;"></div>
<div style="left:0px;top:251px;width:18px;height:17px;background:#c0c0c0;box-shadow:inset 1px 1px #fff;"></div>
<div style="left:0px;top:268px;width:18px;height:1px;background:#000;"></div>
<div style="left:19px;top:268px;width:1200px;height:1px;background:#808080;"></div>
<div style="left:18px;top:0px;width:1px;height:600px;background:#000;"></div>
<div style="left:85px;top:0px;width:3px;height:600px;background:#000;"></div>
<div style="left:1033px;top:0px;width:1px;height:17px;background:#000;"></div>
<div style="left:1033px;top:17px;width:1px;height:600px;background:#808080;"></div>
<div class="t" style="left:19px;top:1px;font-size:13px;line-height:15px;color:#000;font-weight:normal;width:63px;text-align:right;transform:scaleY(1.1);transform-origin:0 12px;">ID</div>
<div class="t" style="left:90px;top:1px;font-size:13px;line-height:15px;color:#000;font-weight:normal;width:943px;text-align:left;transform:scaleY(1.1);transform-origin:0 12px;overflow:hidden;">Text</div>
<svg class="a" style="left:7px;top:20px" width="7" height="11" viewBox="0 0 7 11"><path d="M0 0 L6 5.5 L0 11 Z" fill="#000"/></svg>
<div class="t" style="left:19px;top:18px;font-size:13px;line-height:15px;color:#000;font-weight:normal;width:63px;text-align:right;transform:scaleY(1.1);transform-origin:0 12px;">0</div>
<div class="t" style="left:90px;top:18px;font-size:13px;line-height:15px;color:#000;font-weight:normal;width:943px;text-align:left;transform:scaleY(1.1);transform-origin:0 12px;overflow:hidden;">Bad Strref</div>
<div class="t" style="left:19px;top:36px;font-size:13px;line-height:15px;color:#000;font-weight:normal;width:63px;text-align:right;transform:scaleY(1.1);transform-origin:0 12px;">1</div>
<div class="t" style="left:90px;top:36px;font-size:13px;line-height:15px;color:#000;font-weight:normal;width:943px;text-align:left;transform:scaleY(1.1);transform-origin:0 12px;overflow:hidden;">Barbaren</div>
<div class="t" style="left:19px;top:54px;font-size:13px;line-height:15px;color:#000;font-weight:normal;width:63px;text-align:right;transform:scaleY(1.1);transform-origin:0 12px;">2</div>
<div class="t" style="left:90px;top:54px;font-size:13px;line-height:15px;color:#000;font-weight:normal;width:943px;text-align:left;transform:scaleY(1.1);transform-origin:0 12px;overflow:hidden;">Barde</div>
<div class="t" style="left:19px;top:72px;font-size:13px;line-height:15px;color:#000;font-weight:normal;width:63px;text-align:right;transform:scaleY(1.1);transform-origin:0 12px;">3</div>
<div class="t" style="left:90px;top:72px;font-size:13px;line-height:15px;color:#000;font-weight:normal;width:943px;text-align:left;transform:scaleY(1.1);transform-origin:0 12px;overflow:hidden;">Barden</div>
<div class="t" style="left:19px;top:90px;font-size:13px;line-height:15px;color:#000;font-weight:normal;width:63px;text-align:right;transform:scaleY(1.1);transform-origin:0 12px;">4</div>
<div class="t" style="left:90px;top:90px;font-size:13px;line-height:15px;color:#000;font-weight:normal;width:943px;text-align:left;transform:scaleY(1.1);transform-origin:0 12px;overflow:hidden;">Kleriker</div>
<div class="t" style="left:19px;top:108px;font-size:13px;line-height:15px;color:#000;font-weight:normal;width:63px;text-align:right;transform:scaleY(1.1);transform-origin:0 12px;">5</div>
<div class="t" style="left:90px;top:108px;font-size:13px;line-height:15px;color:#000;font-weight:normal;width:943px;text-align:left;transform:scaleY(1.1);transform-origin:0 12px;overflow:hidden;">Kleriker</div>
<div class="t" style="left:19px;top:126px;font-size:13px;line-height:15px;color:#000;font-weight:normal;width:63px;text-align:right;transform:scaleY(1.1);transform-origin:0 12px;">6</div>
<div class="t" style="left:90px;top:126px;font-size:13px;line-height:15px;color:#000;font-weight:normal;width:943px;text-align:left;transform:scaleY(1.1);transform-origin:0 12px;overflow:hidden;">Druide</div>
<div class="t" style="left:19px;top:144px;font-size:13px;line-height:15px;color:#000;font-weight:normal;width:63px;text-align:right;transform:scaleY(1.1);transform-origin:0 12px;">7</div>
<div class="t" style="left:90px;top:144px;font-size:13px;line-height:15px;color:#000;font-weight:normal;width:943px;text-align:left;transform:scaleY(1.1);transform-origin:0 12px;overflow:hidden;">Druiden</div>
<div class="t" style="left:19px;top:162px;font-size:13px;line-height:15px;color:#000;font-weight:normal;width:63px;text-align:right;transform:scaleY(1.1);transform-origin:0 12px;">8</div>
<div class="t" style="left:90px;top:162px;font-size:13px;line-height:15px;color:#000;font-weight:normal;width:943px;text-align:left;transform:scaleY(1.1);transform-origin:0 12px;overflow:hidden;">Kämpfer</div>
<div class="t" style="left:19px;top:180px;font-size:13px;line-height:15px;color:#000;font-weight:normal;width:63px;text-align:right;transform:scaleY(1.1);transform-origin:0 12px;">9</div>
<div class="t" style="left:90px;top:180px;font-size:13px;line-height:15px;color:#000;font-weight:normal;width:943px;text-align:left;transform:scaleY(1.1);transform-origin:0 12px;overflow:hidden;">Kämpfer</div>
<div class="t" style="left:19px;top:198px;font-size:13px;line-height:15px;color:#000;font-weight:normal;width:63px;text-align:right;transform:scaleY(1.1);transform-origin:0 12px;">10</div>
<div class="t" style="left:90px;top:198px;font-size:13px;line-height:15px;color:#000;font-weight:normal;width:943px;text-align:left;transform:scaleY(1.1);transform-origin:0 12px;overflow:hidden;">Mönch</div>
<div class="t" style="left:19px;top:216px;font-size:13px;line-height:15px;color:#000;font-weight:normal;width:63px;text-align:right;transform:scaleY(1.1);transform-origin:0 12px;">11</div>
<div class="t" style="left:90px;top:216px;font-size:13px;line-height:15px;color:#000;font-weight:normal;width:943px;text-align:left;transform:scaleY(1.1);transform-origin:0 12px;overflow:hidden;">Mönche</div>
<div class="t" style="left:19px;top:234px;font-size:13px;line-height:15px;color:#000;font-weight:normal;width:63px;text-align:right;transform:scaleY(1.1);transform-origin:0 12px;">12</div>
<div class="t" style="left:90px;top:234px;font-size:13px;line-height:15px;color:#000;font-weight:normal;width:943px;text-align:left;transform:scaleY(1.1);transform-origin:0 12px;overflow:hidden;">Paladin</div>
<div class="t" style="left:19px;top:252px;font-size:13px;line-height:15px;color:#000;font-weight:normal;width:63px;text-align:right;transform:scaleY(1.1);transform-origin:0 12px;">13</div>
<div class="t" style="left:90px;top:252px;font-size:13px;line-height:15px;color:#000;font-weight:normal;width:943px;text-align:left;transform:scaleY(1.1);transform-origin:0 12px;overflow:hidden;">Paladine</div>
</div>
<div style="left:1002px;top:404px;width:16px;height:262px;background:repeating-conic-gradient(#fff 0 25%,#c0c0c0 0 50%) 0 0/2px 2px;box-shadow:inset -1px 0 #000;"></div>
<div style="left:1002px;top:404px;width:16px;height:16px;background:#c0c0c0;box-shadow:inset -1px -1px #000,inset 1px 1px #c8c8c8,inset -2px -2px #808080,inset 2px 2px #fff;"></div>
<svg class="a" style="left:1006px;top:410px" width="7" height="4" viewBox="0 0 7 4"><path d="M3.5 0 L7 4 H0 Z" fill="#000"/></svg>
<div style="left:1002px;top:420px;width:16px;height:16px;background:#c0c0c0;box-shadow:inset -1px -1px #000,inset 1px 1px #c8c8c8,inset -2px -2px #808080,inset 2px 2px #fff;"></div>
<div style="left:1002px;top:650px;width:16px;height:16px;background:#c0c0c0;box-shadow:inset -1px -1px #000,inset 1px 1px #c8c8c8,inset -2px -2px #808080,inset 2px 2px #fff;"></div>
<svg class="a" style="left:1006px;top:656px" width="7" height="4" viewBox="0 0 7 4"><path d="M0 0 H7 L3.5 4 Z" fill="#000"/></svg>
<div style="left:6px;top:669px;width:97px;height:23px;box-shadow:inset 1px 1px #808080,inset -1px -1px #fff;"></div>
<div class="t" style="left:7px;top:674px;font-size:11px;line-height:13px;color:#000;font-weight:normal;width:97px;text-align:center;transform:scaleY(1);transform-origin:0 10px;">Original TLK</div>
<div style="left:105px;top:669px;width:96px;height:23px;box-shadow:inset 1px 1px #808080,inset -1px -1px #fff;"></div>
<div class="t" style="left:106px;top:674px;font-size:11px;line-height:13px;color:#000;font-weight:normal;width:96px;text-align:center;transform:scaleY(1);transform-origin:0 10px;">Read only !</div>
<div style="left:202px;top:669px;width:798px;height:23px;box-shadow:inset 1px 1px #808080,inset -1px -1px #fff;"></div>
<svg class="a" style="left:1005px;top:679px" width="12" height="12" viewBox="0 0 12 12"><path d="M11.5 0.5 L0.5 11.5 M11.5 4.5 L4.5 11.5 M11.5 8.5 L8.5 11.5" stroke="#fff" stroke-width="1"/><path d="M11.5 1.5 L1.5 11.5 M11.5 2.5 L2.5 11.5 M11.5 5.5 L5.5 11.5 M11.5 6.5 L6.5 11.5 M11.5 9.5 L9.5 11.5 M11.5 10.5 L10.5 11.5" stroke="#808080" stroke-width="1"/></svg>
<div style="left:391px;top:217px;width:528px;height:72px;background:#c0c0c0;box-shadow:inset -1px -1px #000,inset 1px 1px #dfdfdf,inset -2px -2px #808080,inset 2px 2px #fff;"></div>
<div style="left:395px;top:221px;width:520px;height:18px;background:linear-gradient(to right,#000080,#1084d0);"></div>
<svg class="a" style="left:398px;top:222px" width="13" height="16" viewBox="0 0 13 16"><rect x="0" y="0" width="9" height="1" fill="#ffffff"/><rect x="9" y="0" width="2" height="1" fill="#b8b8c0"/><rect x="0" y="1" width="2" height="1" fill="#ffffff"/><rect x="2" y="1" width="1" height="1" fill="#000000"/><rect x="3" y="1" width="2" height="1" fill="#ffffff"/><rect x="5" y="1" width="1" height="1" fill="#000000"/><rect x="6" y="1" width="2" height="1" fill="#ffffff"/><rect x="8" y="1" width="1" height="1" fill="#000000"/><rect x="9" y="1" width="1" height="1" fill="#ffffff"/><rect x="10" y="1" width="2" height="1" fill="#b8b8c0"/><rect x="0" y="2" width="1" height="1" fill="#ffffff"/><rect x="1" y="2" width="1" height="1" fill="#000000"/><rect x="2" y="2" width="1" height="1" fill="#ffffff"/><rect x="3" y="2" width="2" height="1" fill="#000000"/><rect x="5" y="2" width="1" height="1" fill="#ffffff"/><rect x="6" y="2" width="2" height="1" fill="#000000"/><rect x="8" y="2" width="1" height="1" fill="#ffffff"/><rect x="9" y="2" width="1" height="1" fill="#000000"/><rect x="10" y="2" width="1" height="1" fill="#ffffff"/><rect x="11" y="2" width="2" height="1" fill="#b8b8c0"/><rect x="0" y="3" width="1" height="1" fill="#ffffff"/><rect x="1" y="3" width="1" height="1" fill="#000000"/><rect x="2" y="3" width="1" height="1" fill="#ffffff"/><rect x="3" y="3" width="2" height="1" fill="#000000"/><rect x="5" y="3" width="1" height="1" fill="#ffffff"/><rect x="6" y="3" width="2" height="1" fill="#000000"/><rect x="8" y="3" width="1" height="1" fill="#ffffff"/><rect x="9" y="3" width="1" height="1" fill="#000000"/><rect x="10" y="3" width="2" height="1" fill="#ffffff"/><rect x="12" y="3" width="1" height="1" fill="#c8c8e0"/><rect x="0" y="4" width="2" height="1" fill="#ffffff"/><rect x="2" y="4" width="1" height="1" fill="#000000"/><rect x="3" y="4" width="2" height="1" fill="#ffffff"/><rect x="5" y="4" width="1" height="1" fill="#000000"/><rect x="6" y="4" width="2" height="1" fill="#ffffff"/><rect x="8" y="4" width="1" height="1" fill="#000000"/><rect x="9" y="4" width="3" height="1" fill="#ffffff"/><rect x="12" y="4" width="1" height="1" fill="#c8c8e0"/><rect x="0" y="5" width="12" height="1" fill="#ffffff"/><rect x="12" y="5" width="1" height="1" fill="#c8c8e0"/><rect x="0" y="6" width="1" height="1" fill="#ffffff"/><rect x="1" y="6" width="1" height="1" fill="#000000"/><rect x="2" y="6" width="1" height="1" fill="#ffffff"/><rect x="3" y="6" width="2" height="1" fill="#000000"/><rect x="5" y="6" width="1" height="1" fill="#ffffff"/><rect x="6" y="6" width="4" height="1" fill="#000000"/><rect x="10" y="6" width="2" height="1" fill="#ffffff"/><rect x="12" y="6" width="1" height="1" fill="#c8c8e0"/><rect x="0" y="7" width="1" height="1" fill="#ffffff"/><rect x="1" y="7" width="1" height="1" fill="#000000"/><rect x="2" y="7" width="1" height="1" fill="#ffffff"/><rect x="3" y="7" width="2" height="1" fill="#000000"/><rect x="5" y="7" width="1" height="1" fill="#ffffff"/><rect x="6" y="7" width="4" height="1" fill="#000000"/><rect x="10" y="7" width="2" height="1" fill="#ffffff"/><rect x="12" y="7" width="1" height="1" fill="#c8c8e0"/><rect x="0" y="8" width="1" height="1" fill="#ffffff"/><rect x="1" y="8" width="1" height="1" fill="#000000"/><rect x="2" y="8" width="1" height="1" fill="#ffffff"/><rect x="3" y="8" width="2" height="1" fill="#000000"/><rect x="5" y="8" width="1" height="1" fill="#ffffff"/><rect x="6" y="8" width="4" height="1" fill="#000000"/><rect x="10" y="8" width="2" height="1" fill="#ffffff"/><rect x="12" y="8" width="1" height="1" fill="#c8c8e0"/><rect x="0" y="9" width="12" height="1" fill="#ffffff"/><rect x="12" y="9" width="1" height="1" fill="#c8c8e0"/><rect x="0" y="10" width="1" height="1" fill="#ffffff"/><rect x="1" y="10" width="1" height="1" fill="#000000"/><rect x="2" y="10" width="1" height="1" fill="#ffffff"/><rect x="3" y="10" width="1" height="1" fill="#000000"/><rect x="4" y="10" width="1" height="1" fill="#ffffff"/><rect x="5" y="10" width="1" height="1" fill="#000000"/><rect x="6" y="10" width="1" height="1" fill="#ffffff"/><rect x="7" y="10" width="1" height="1" fill="#000000"/><rect x="8" y="10" width="1" height="1" fill="#ffffff"/><rect x="9" y="10" width="1" height="1" fill="#000000"/><rect x="10" y="10" width="2" height="1" fill="#ffffff"/><rect x="12" y="10" width="1" height="1" fill="#c8c8e0"/><rect x="0" y="11" width="2" height="1" fill="#ffffff"/><rect x="2" y="11" width="1" height="1" fill="#000000"/><rect x="3" y="11" width="1" height="1" fill="#ffffff"/><rect x="4" y="11" width="1" height="1" fill="#000000"/><rect x="5" y="11" width="1" height="1" fill="#ffffff"/><rect x="6" y="11" width="1" height="1" fill="#000000"/><rect x="7" y="11" width="1" height="1" fill="#ffffff"/><rect x="8" y="11" width="1" height="1" fill="#000000"/><rect x="9" y="11" width="3" height="1" fill="#ffffff"/><rect x="12" y="11" width="1" height="1" fill="#c8c8e0"/><rect x="0" y="12" width="2" height="1" fill="#ffffff"/><rect x="2" y="12" width="1" height="1" fill="#000000"/><rect x="3" y="12" width="1" height="1" fill="#ffffff"/><rect x="4" y="12" width="1" height="1" fill="#000000"/><rect x="5" y="12" width="1" height="1" fill="#ffffff"/><rect x="6" y="12" width="1" height="1" fill="#000000"/><rect x="7" y="12" width="1" height="1" fill="#ffffff"/><rect x="8" y="12" width="1" height="1" fill="#000000"/><rect x="9" y="12" width="3" height="1" fill="#ffffff"/><rect x="12" y="12" width="1" height="1" fill="#c8c8e0"/><rect x="0" y="13" width="1" height="1" fill="#ffffff"/><rect x="1" y="13" width="1" height="1" fill="#000000"/><rect x="2" y="13" width="1" height="1" fill="#ffffff"/><rect x="3" y="13" width="1" height="1" fill="#000000"/><rect x="4" y="13" width="1" height="1" fill="#ffffff"/><rect x="5" y="13" width="1" height="1" fill="#000000"/><rect x="6" y="13" width="1" height="1" fill="#ffffff"/><rect x="7" y="13" width="1" height="1" fill="#000000"/><rect x="8" y="13" width="1" height="1" fill="#ffffff"/><rect x="9" y="13" width="1" height="1" fill="#000000"/><rect x="10" y="13" width="2" height="1" fill="#ffffff"/><rect x="12" y="13" width="1" height="1" fill="#c8c8e0"/><rect x="0" y="14" width="12" height="1" fill="#ffffff"/><rect x="12" y="14" width="1" height="1" fill="#c8c8e0"/><rect x="0" y="15" width="12" height="1" fill="#c8c8e0"/></svg>
<div class="t" style="left:415px;top:223px;font-size:12px;line-height:14px;color:#fff;font-weight:bold;-webkit-text-stroke:0;">Classes.2DA / AlignRestrict</div>
<div class="t" style="left:584px;top:223px;font-size:12px;line-height:14px;color:#fff;font-weight:bold;-webkit-text-stroke:0;">Current Value: 0x05</div>
<div style="left:897px;top:223px;width:16px;height:14px;background:#c0c0c0;box-shadow:inset -1px -1px #000,inset 1px 1px #dfdfdf,inset -2px -2px #808080,inset 2px 2px #fff;"></div>
<svg class="a" style="left:901px;top:226px" width="8" height="7" viewBox="0 0 8 7"><path d="M0.5 0 L4 3.5 L7.5 0 M0.5 7 L4 3.5 L7.5 7" stroke="#000" stroke-width="1.5" fill="none"/></svg>
<div style="left:403px;top:242px;width:13px;height:13px;box-shadow:inset 1px 1px #808080,inset -1px -1px #fff,inset 2px 2px #000,inset -2px -2px #dfdfdf;background:#fff;"></div>
<svg class="a" style="left:406px;top:245px" width="7" height="7" viewBox="0 0 7 7"><path d="M0.5 3 L2.5 5.5 L6.5 0.8" stroke="#000" stroke-width="1.8" fill="none"/></svg>
<div class="t" style="left:421px;top:242px;font-size:11px;line-height:13px;color:#000;font-weight:normal;transform:scaleY(1.12);transform-origin:0 10px;">No Neutral</div>
<div style="left:531px;top:242px;width:13px;height:13px;box-shadow:inset 1px 1px #808080,inset -1px -1px #fff,inset 2px 2px #000,inset -2px -2px #dfdfdf;background:#fff;"></div>
<div class="t" style="left:549px;top:242px;font-size:11px;line-height:13px;color:#000;font-weight:normal;transform:scaleY(1.12);transform-origin:0 10px;">No Lawful</div>
<div style="left:548px;top:240px;width:50px;height:17px;border:1px dotted #000;"></div>
<div style="left:659px;top:242px;width:13px;height:13px;box-shadow:inset 1px 1px #808080,inset -1px -1px #fff,inset 2px 2px #000,inset -2px -2px #dfdfdf;background:#fff;"></div>
<svg class="a" style="left:662px;top:245px" width="7" height="7" viewBox="0 0 7 7"><path d="M0.5 3 L2.5 5.5 L6.5 0.8" stroke="#000" stroke-width="1.8" fill="none"/></svg>
<div class="t" style="left:677px;top:242px;font-size:11px;line-height:13px;color:#000;font-weight:normal;transform:scaleY(1.12);transform-origin:0 10px;">No Chaotic</div>
<div style="left:787px;top:242px;width:13px;height:13px;box-shadow:inset 1px 1px #808080,inset -1px -1px #fff,inset 2px 2px #000,inset -2px -2px #dfdfdf;background:#fff;"></div>
<div class="t" style="left:805px;top:242px;font-size:11px;line-height:13px;color:#000;font-weight:normal;transform:scaleY(1.12);transform-origin:0 10px;">No Good</div>
<div style="left:403px;top:258px;width:13px;height:13px;box-shadow:inset 1px 1px #808080,inset -1px -1px #fff,inset 2px 2px #000,inset -2px -2px #dfdfdf;background:#fff;"></div>
<div class="t" style="left:421px;top:258px;font-size:11px;line-height:13px;color:#000;font-weight:normal;transform:scaleY(1.12);transform-origin:0 10px;">No Evil</div>
</body></html>
